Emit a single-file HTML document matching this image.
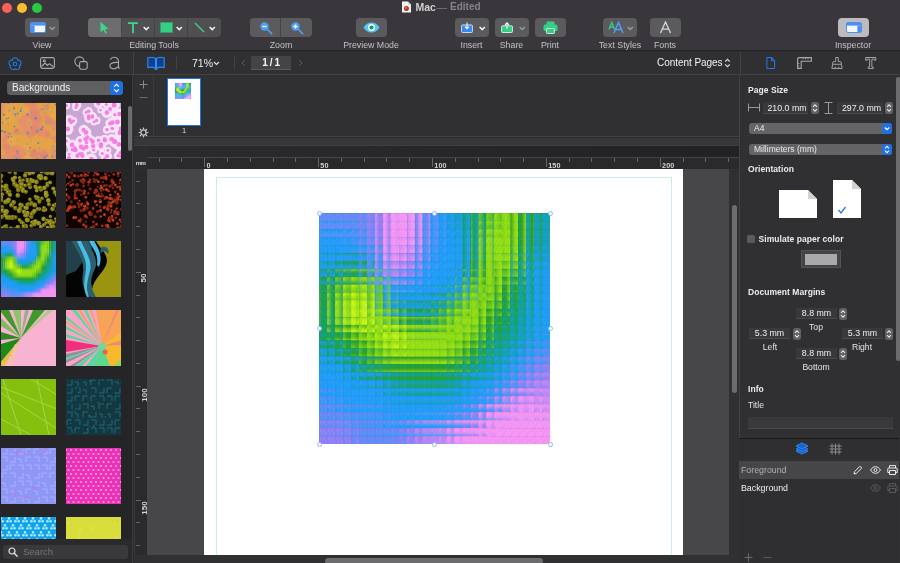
<!DOCTYPE html>
<html lang="en">
<head>
<meta charset="utf-8">
<title>Mac — Edited</title>
<style>
*{box-sizing:border-box;margin:0;padding:0}
html,body{width:900px;height:563px;overflow:hidden;background:#2b2a2d}
body{will-change:transform;font-family:"Liberation Sans",sans-serif;font-size:9px;color:#dcdcdc;position:relative;-webkit-font-smoothing:antialiased}
.abs{position:absolute}
/* ---------- toolbar ---------- */
#toolbar{position:absolute;left:0;top:0;width:900px;height:51px;background:#39373b;border-bottom:1px solid #252327}
.tl{position:absolute;top:3px;width:10px;height:10px;border-radius:50%}
.tbtn{position:absolute;top:18px;height:19px;border-radius:4px;background:#5b5a5d}
.tlabel{position:absolute;top:39.5px;width:80px;margin-left:-40px;text-align:center;font-size:8.8px;color:#c2c1c4;letter-spacing:0;line-height:11px;white-space:nowrap}
.seg{position:absolute;top:0;height:19px}
.chev{position:absolute;top:6.5px;width:6.5px;height:6.5px;margin-left:-.8px}
.title{position:absolute;top:1px;font-size:10.5px;line-height:12px;font-weight:bold;color:#d0cfd2;white-space:nowrap}
/* ---------- tab bar ---------- */
#tabbar{position:absolute;left:0;top:52px;width:900px;height:23px;background:#302f31;border-bottom:1px solid #414043}
.vsep{position:absolute;width:1px;background:#414043}
/* ---------- sidebar ---------- */
#sidebar{position:absolute;left:0;top:75px;width:133px;height:488px;background:#252427;border-right:1px solid #3b3a3d;overflow:hidden}
.th{position:absolute;width:55.5px;height:56px;overflow:hidden}
.th svg{display:block}
#bgsel{position:absolute;left:7px;top:6px;width:116px;height:14px;border-radius:3.5px;background:#5f5e61;color:#eeeeee;font-size:10px;line-height:14px;padding-left:5px;overflow:hidden}
#bgsel i{position:absolute;right:0;top:0;width:13px;height:14px;background:#1f6fe5;border-radius:3px}
#search{position:absolute;left:0;top:464px;width:132px;height:24px;background:#2a292c}
#search div{position:absolute;left:3px;top:6px;width:125px;height:14px;border-radius:3.5px;background:#39383b;color:#77767a;font-size:9.5px;line-height:14px;padding-left:20px}
/* ---------- page strip ---------- */
#strip{position:absolute;left:134px;top:75px;width:606px;height:62px;background:#302f31;border-bottom:1px solid #414043}
#splitter{position:absolute;left:134px;top:138px;width:606px;height:8px;background:#373638;border-bottom:1px solid #3f3e41}
/* ---------- canvas ---------- */
#canvas{position:absolute;left:147px;top:169px;width:582px;height:386px;background:#474649;overflow:hidden}
#page{position:absolute;left:57px;top:0;width:479px;height:400px;background:#fff}
#guides{position:absolute;left:12px;top:8px;width:456px;height:400px;border:1px solid #c9efea}
#rulertop{position:absolute;left:134px;top:146px;width:606px;height:11px;background:#2d2c2f}
#rulertop i{position:absolute;left:13px;top:0;width:592px;height:11px;background:linear-gradient(90deg,#2b2a2c,#222123)}
#rulerh{position:absolute;left:147px;top:157px;width:592px;height:12px;background:#2a292c;border-top:1px solid #454447;overflow:hidden}
#rulerv{position:absolute;left:134px;top:169px;width:13px;height:394px;background:#2a292c;overflow:hidden;border-left:1px solid #3a393c}
#rcorner{position:absolute;left:134px;top:157px;width:13px;height:12px;background:#2d2c2f;font-size:6px;font-weight:bold;color:#dedede;line-height:12px;text-align:center;letter-spacing:-.5px}
.rl{position:absolute;font-size:7.2px;font-weight:bold;color:#d4d4d4;line-height:8px;letter-spacing:.1px}
#vscroll{position:absolute;left:729px;top:169px;width:11px;height:386px;background:#302f32}
#vscroll i{position:absolute;left:3px;top:36px;width:5px;height:188px;border-radius:3px;background:#6c6b6e}
#hscroll{position:absolute;left:134px;top:555px;width:606px;height:8px;background:#302f32}
#hscroll i{position:absolute;left:191px;top:3px;width:218px;height:6px;border-radius:3px;background:#6c6b6e}
/* ---------- inspector ---------- */
#insp{position:absolute;left:739px;top:75px;width:161px;height:488px;background:#302f31;box-shadow:inset 2px 0 0 -1px #414043}
.h{position:absolute;left:9px;font-size:8.5px;font-weight:bold;color:#ececec;line-height:10px;white-space:nowrap;letter-spacing:.05px}
.fld{position:absolute;height:11px;background:#39383b;border-bottom:1px solid #4a494c;color:#efefef;font-size:8.8px;line-height:11px;text-align:center;white-space:nowrap}
.stp{position:absolute;width:8px;height:12px;border-radius:2.5px;background:#616063}
.stp svg,.sel i svg{display:block}
.sel{position:absolute;left:10px;width:143px;height:11px;border-radius:3px;background:#646366;color:#ececec;font-size:8.5px;line-height:11px;padding-left:5px}
.sel i{position:absolute;right:0;top:0;width:10px;height:11px;border-radius:3px;background:#1f6fe5}
.lab{position:absolute;width:60px;margin-left:-30px;text-align:center;font-size:8.6px;line-height:10px;color:#e4e4e4}
</style>
</head>
<body>
<div id="toolbar">
  <div class="tl" style="left:2px;background:#fe5f57"></div>
  <div class="tl" style="left:17px;background:#febc2e"></div>
  <div class="tl" style="left:32px;background:#28c840"></div>

  <svg class="abs" style="left:401px;top:1px" width="11" height="12" viewBox="0 0 11 12"><path d="M1 .5h6l3 3v8H1z" fill="#f4f4f4"/><path d="M7 .5l3 3H7z" fill="#c9c9c9"/><circle cx="5.4" cy="7.4" r="2.5" fill="#b8321c"/><circle cx="5" cy="7" r="1" fill="#e8853a"/></svg>
  <div class="title" style="left:415.5px">Mac</div><div class="title" style="left:436.5px;color:#7d7c80;font-weight:normal">—</div><div class="title" style="left:450px;color:#858488;font-size:10px">Edited</div>

  <!-- View -->
  <div class="tbtn" style="left:25px;width:34px">
    <svg class="abs" style="left:5px;top:4px" width="16" height="11" viewBox="0 0 16 11"><rect x=".5" y=".5" width="15" height="10" rx="1.5" fill="#f2f6ff" stroke="#4d90f0"/><rect x="1" y="1" width="14" height="2.6" fill="#4d90f0"/><rect x="1" y="3.6" width="3.6" height="6.4" fill="#4d90f0"/></svg>
    <svg class="chev" style="left:25px" viewBox="0 0 5 5"><path d="M.5 1.5l2 2 2-2" fill="none" stroke="#9a999c" stroke-width="1.1"/></svg>
  </div>
  <div class="tlabel" style="left:42px">View</div>

  <!-- Editing tools -->
  <div class="tbtn" style="left:88px;width:133px;background:#504f52;overflow:hidden">
    <div class="seg" style="left:0;width:33px;background:#6d6c6f"></div>
    <div class="seg" style="left:33px;width:1px;background:#444346"></div>
    <div class="seg" style="left:66px;width:1px;background:#444346"></div>
    <div class="seg" style="left:99px;width:1px;background:#444346"></div>
    <svg class="abs" style="left:11px;top:3px" width="11" height="13" viewBox="0 0 11 13"><path d="M1.5 .8l8 7.2-3.5 .3 2 3.6-1.5 .8-2-3.7-3 2.3z" fill="#3fd58a"/></svg>
    <svg class="abs" style="left:39px;top:4px" width="12" height="12" viewBox="0 0 12 12"><path d="M1 1.2h10M6 1.2v10" stroke="#3fd58a" stroke-width="1.8" fill="none"/></svg>
    <svg class="chev" style="left:56px" viewBox="0 0 5 5"><path d="M.5 1.5l2 2 2-2" fill="none" stroke="#f2f2f2" stroke-width="1.2"/></svg>
    <svg class="abs" style="left:72px;top:4px" width="13" height="11" viewBox="0 0 13 11"><rect x=".5" y=".5" width="12" height="10" fill="#35cf86" stroke="#2aa56a" stroke-dasharray="1 1"/></svg>
    <svg class="chev" style="left:89px" viewBox="0 0 5 5"><path d="M.5 1.5l2 2 2-2" fill="none" stroke="#f2f2f2" stroke-width="1.2"/></svg>
    <svg class="abs" style="left:106px;top:4px" width="11" height="11" viewBox="0 0 11 11"><path d="M1 1l9 9" stroke="#3fd58a" stroke-width="1.3"/></svg>
    <svg class="chev" style="left:122px" viewBox="0 0 5 5"><path d="M.5 1.5l2 2 2-2" fill="none" stroke="#f2f2f2" stroke-width="1.2"/></svg>
  </div>
  <div class="tlabel" style="left:154px">Editing Tools</div>

  <!-- Zoom -->
  <div class="tbtn" style="left:250px;width:62px">
    <div class="seg" style="left:30px;width:1px;background:#444346"></div>
    <svg class="abs" style="left:9px;top:3px" width="14" height="14" viewBox="0 0 14 14"><circle cx="5.5" cy="5.5" r="4.2" fill="#4fa0f5"/><path d="M8.6 8.6l4 4" stroke="#4fa0f5" stroke-width="1.6" stroke-linecap="round"/><path d="M3.4 5.5h4.2" stroke="#fff" stroke-width="1.3"/></svg>
    <svg class="abs" style="left:40px;top:3px" width="14" height="14" viewBox="0 0 14 14"><circle cx="5.5" cy="5.5" r="4.2" fill="#4fa0f5"/><path d="M8.6 8.6l4 4" stroke="#4fa0f5" stroke-width="1.6" stroke-linecap="round"/><path d="M3.4 5.5h4.2M5.5 3.4v4.2" stroke="#fff" stroke-width="1.3"/></svg>
  </div>
  <div class="tlabel" style="left:281px">Zoom</div>

  <!-- Preview -->
  <div class="tbtn" style="left:356px;width:31px">
    <svg class="abs" style="left:7px;top:4px" width="17" height="11" viewBox="0 0 17 11"><path d="M.5 5.5C3 1.5 6 .5 8.5 .5s5.5 1 8 5c-2.5 4-5.5 5-8 5s-5.5-1-8-5z" fill="#58c6f2"/><circle cx="8.5" cy="5.5" r="3.4" fill="#fff"/><circle cx="8.5" cy="5.5" r="2.1" fill="#1a9a63"/></svg>
  </div>
  <div class="tlabel" style="left:371px">Preview Mode</div>

  <!-- Insert -->
  <div class="tbtn" style="left:455px;width:34px">
    <svg class="abs" style="left:5.5px;top:4px" width="12" height="11" viewBox="0 0 14 13"><rect x=".6" y="3.5" width="12.8" height="8.9" rx="1" fill="#3b86ee" stroke="#cfe2ff" stroke-width="1.1"/><path d="M7 .5v7M4.6 5.500L7 8l2.4-2.5" stroke="#fff" stroke-width="1.2" fill="none"/></svg>
    <svg class="chev" style="left:25px" viewBox="0 0 5 5"><path d="M.5 1.5l2 2 2-2" fill="none" stroke="#f2f2f2" stroke-width="1.2"/></svg>
  </div>
  <div class="tlabel" style="left:471.500px">Insert</div>

  <!-- Share -->
  <div class="tbtn" style="left:495px;width:34px">
    <svg class="abs" style="left:5.5px;top:4px" width="12" height="11" viewBox="0 0 14 13"><rect x=".6" y="4.5" width="12.8" height="7.9" rx="1" fill="#35cf86" stroke="#d6f7e6" stroke-width="1.1"/><path d="M7 8V1M4.6 3.400L7 .9l2.4 2.5" stroke="#fff" stroke-width="1.2" fill="none"/></svg>
    <svg class="chev" style="left:25px" viewBox="0 0 5 5"><path d="M.5 1.5l2 2 2-2" fill="none" stroke="#9a999c" stroke-width="1.1"/></svg>
  </div>
  <div class="tlabel" style="left:511.500px">Share</div>

  <!-- Print -->
  <div class="tbtn" style="left:535px;width:31px">
    <svg class="abs" style="left:8px;top:3px" width="15" height="13" viewBox="0 0 15 13"><rect x="3.5" y=".5" width="8" height="3.5" rx=".8" fill="#35cf86"/><rect x=".5" y="3.6" width="14" height="6.4" rx="1.5" fill="#35cf86"/><rect x="3.5" y="7.5" width="8" height="5" rx=".8" fill="#35cf86" stroke="#d6f7e6" stroke-width=".9"/></svg>
  </div>
  <div class="tlabel" style="left:550px">Print</div>

  <!-- Text styles -->
  <div class="tbtn" style="left:603px;width:34px">
    <svg class="abs" style="left:5px;top:3px" width="17" height="13" viewBox="0 0 17 13"><path d="M1 8.500L3.8 1.5 6.6 8.500M2 6.200h3.6" stroke="#35cf86" stroke-width="1.3" fill="none"/><path d="M6 12L10.5 1.5 15 12M7.6 8.500h5.8" stroke="#4fa0f5" stroke-width="1.5" fill="none"/></svg>
    <svg class="chev" style="left:25px" viewBox="0 0 5 5"><path d="M.5 1.500l2 2 2-2" fill="none" stroke="#9a999c" stroke-width="1.1"/></svg>
  </div>
  <div class="tlabel" style="left:620px">Text Styles</div>

  <!-- Fonts -->
  <div class="tbtn" style="left:650px;width:31px">
    <svg class="abs" style="left:9px;top:3px" width="13" height="13" viewBox="0 0 13 13"><path d="M1.5 12L6.5 1l5 11M3.3 8.200h6.4" stroke="#d8d8d8" stroke-width="1.3" fill="none"/></svg>
  </div>
  <div class="tlabel" style="left:665px">Fonts</div>

  <!-- Inspector -->
  <div class="tbtn" style="left:838px;width:31px;background:#bcbbbe">
    <svg class="abs" style="left:8px;top:4px" width="16" height="11" viewBox="0 0 16 11"><rect x=".5" y=".5" width="15" height="10" rx="1.5" fill="#f2f6ff" stroke="#4d90f0"/><rect x="1" y="1" width="14" height="2.6" fill="#4d90f0"/><rect x="11.4" y="3.6" width="3.6" height="6.4" fill="#4d90f0"/></svg>
  </div>
  <div class="tlabel" style="left:853px">Inspector</div>
</div>

<div id="tabbar">
  <!-- sidebar tabs -->
  <svg class="abs" style="left:8px;top:4.5px" width="14" height="14" viewBox="0 0 14 14"><circle cx="7.00" cy="3.80" r="2.9" fill="none" stroke="#1f7bea" stroke-width="1.2"/><circle cx="10.04" cy="6.01" r="2.9" fill="none" stroke="#1f7bea" stroke-width="1.2"/><circle cx="8.88" cy="9.59" r="2.9" fill="none" stroke="#1f7bea" stroke-width="1.2"/><circle cx="5.12" cy="9.59" r="2.9" fill="none" stroke="#1f7bea" stroke-width="1.2"/><circle cx="3.96" cy="6.01" r="2.9" fill="none" stroke="#1f7bea" stroke-width="1.2"/><circle cx="7.00" cy="3.80" r="2.3" fill="#302f31"/><circle cx="10.04" cy="6.01" r="2.3" fill="#302f31"/><circle cx="8.88" cy="9.59" r="2.3" fill="#302f31"/><circle cx="5.12" cy="9.59" r="2.3" fill="#302f31"/><circle cx="3.96" cy="6.01" r="2.3" fill="#302f31"/><circle cx="7" cy="7" r="3.2" fill="#302f31"/><circle cx="7" cy="7" r="1.8" fill="none" stroke="#1f7bea" stroke-width="1.1"/></svg>
  <svg class="abs" style="left:40px;top:5px" width="15" height="12" viewBox="0 0 15 12"><g fill="none" stroke="#a9a8ab" stroke-width="1.1"><rect x=".6" y=".6" width="13.8" height="10.8" rx="1.8"/><path d="M1.5 9.500l3.5-3.5 2.5 2.5 2-1.8 4 3.3"/><circle cx="4.3" cy="3.8" r="1"/></g></svg>
  <svg class="abs" style="left:74px;top:4px" width="14" height="14" viewBox="0 0 14 14"><g fill="none" stroke="#a9a8ab" stroke-width="1.1"><circle cx="5.5" cy="5.5" r="4.6"/><rect x="5.6" y="5.6" width="7.6" height="7.6" rx="1.6" fill="#302f31"/></g></svg>
  <svg class="abs" style="left:108px;top:4px" width="13" height="14" viewBox="0 0 13 14"><g fill="none" stroke="#a9a8ab" stroke-width="1.1"><path d="M2.2 3.600C3.5 1.5 6 1 7.8 1.600c1.8.6 2.7 2 2.7 4v5.500c0 .8.5 1.2 1.3 1M10.5 6.500c-3-.3-5.5 0-7.3 1-1.8 1-1.8 3.5-.2 4.5 1.6 1 4.2.8 5.8-.3 1-.7 1.7-1.7 1.7-2.7"/></g></svg>
  <div class="vsep" style="left:133px;top:0;height:22px"></div>
  <!-- book -->
  <svg class="abs" style="left:147px;top:4px" width="18" height="15" viewBox="0 0 18 15"><path d="M.8 1.800C3.3 1 6.3 1.1 8.5 2.300v9.900C6.3 11 3.3 10.9.8 11.600zM17.2 1.800C14.7 1 11.7 1.1 9.5 2.300v9.900c2.2-1.2 5.2-1.3 7.7-.6z" fill="#10408c" stroke="#2f8af2" stroke-width="1.1" stroke-linejoin="round"/><path d="M7.3 12.600h3.400l-.6 1.400H7.900z" fill="#2f8af2"/></svg>
  <div class="vsep" style="left:176px;top:4px;height:14px"></div>
  <div class="abs" style="left:192px;top:5px;font-size:10.500px;line-height:12px;color:#ececec">71%</div>
  <svg class="abs" style="left:212.5px;top:9px" width="7" height="5" viewBox="0 0 7 5"><path d="M1 1l2.5 2.500L6 1" fill="none" stroke="#e0e0e0" stroke-width="1.2"/></svg>
  <div class="vsep" style="left:234px;top:4px;height:14px"></div>
  <svg class="abs" style="left:241px;top:7px" width="5" height="8" viewBox="0 0 5 8"><path d="M4 1L1 4l3 3" fill="none" stroke="#5c5b5e" stroke-width="1"/></svg>
  <div class="abs" style="left:250.500px;top:4px;width:40.500px;height:14px;background:#444346;border-bottom:1px solid #5a595c;font-size:10px;line-height:13.500px;text-align:center;color:#f4f4f4;font-weight:bold;word-spacing:-.8px;padding-left:1px">1 / 1</div>
  <svg class="abs" style="left:298px;top:7px" width="5" height="8" viewBox="0 0 5 8"><path d="M1 1l3 3-3 3" fill="none" stroke="#5c5b5e" stroke-width="1"/></svg>
  <div class="abs" style="left:657px;top:5px;font-size:10px;line-height:12px;color:#f2f2f2;white-space:nowrap;letter-spacing:-.05px">Content Pages</div>
  <svg class="abs" style="left:724px;top:6px" width="7" height="10" viewBox="0 0 7 10"><path d="M1.2 3.600L3.5 1.300l2.3 2.300M1.2 6.400l2.3 2.3 2.3-2.3" fill="none" stroke="#e0e0e0" stroke-width="1.1"/></svg>
  <div class="vsep" style="left:740px;top:0;height:22px"></div>
  <!-- inspector tabs -->
  <svg class="abs" style="left:766px;top:5px" width="9.5" height="12" viewBox="0 0 11 14"><path d="M1 1.600Q1 .6 2 .6h4.500L10 4.200v8.200q0 1-1 1H2q-1 0-1-1zM6.3.8v3.600H9.8" fill="none" stroke="#1f7bea" stroke-width="1.2"/></svg>
  <svg class="abs" style="left:797px;top:5px" width="15" height="12" viewBox="0 0 15 12"><path d="M.6 11.400V2.200Q.6.6 2.2.6H14.400V4.200H4.200V11.400z" fill="none" stroke="#a9a8ab" stroke-width="1.1"/><path d="M6 .8v1.600M8.5.8v1.600M11 .8v1.600M.8 6.500h1.600M.8 9h1.6" stroke="#a9a8ab" stroke-width=".8"/></svg>
  <svg class="abs" style="left:831px;top:5px" width="12" height="12" viewBox="0 0 14 14"><path d="M5.5.6h3v4.800h2.200q1.3 0 1.3 1.300V8.500H2V6.700q0-1.3 1.3-1.300H5.500zM2 8.500L1 13.400H13L12 8.500M5 13.200v-2M9 13.200v-2" fill="none" stroke="#a9a8ab" stroke-width="1.1"/></svg>
  <svg class="abs" style="left:865px;top:5px" width="11.5" height="12" viewBox="0 0 13 14"><path d="M.6.6H12.400V3.800H10.600V2.500H7.800V11.600H9.400V13.400H3.600V11.600H5.200V2.500H2.400V3.800H.6z" fill="none" stroke="#a9a8ab" stroke-width="1.1" stroke-linejoin="round"/></svg>
</div>

<div id="sidebar">
<div id="bgsel">Backgrounds<i><svg width="13" height="14" viewBox="0 0 13 14"><path d="M4.2 5.600L6.5 3.300l2.3 2.300M4.2 8.400l2.3 2.3 2.3-2.3" fill="none" stroke="#fff" stroke-width="1.2"/></svg></i></div>
<div class="th" style="left:0.5px;top:28px"><svg width="56" height="56" viewBox="0 0 56 56"><defs><filter id="t0b"><feGaussianBlur stdDeviation=".8"/></filter></defs><rect width="56" height="56" fill="#e5a346"/><g filter="url(#t0b)"><circle cx="6.1" cy="48.8" r="4.4" fill="#e8a848"/><circle cx="5.1" cy="43.7" r="3.7" fill="#e4866e"/><circle cx="45.3" cy="3.6" r="2.6" fill="#e4866e"/><circle cx="24.0" cy="43.7" r="2.5" fill="#e4866e"/><circle cx="14.0" cy="46.1" r="4.0" fill="#e78b6b"/><circle cx="52.1" cy="-0.2" r="2.6" fill="#e78b6b"/><circle cx="54.3" cy="20.9" r="3.0" fill="#e4866e"/><circle cx="41.6" cy="29.7" r="4.4" fill="#e4866e"/><circle cx="31.2" cy="18.7" r="4.2" fill="#e4866e"/><circle cx="55.1" cy="53.6" r="3.5" fill="#e78b6b"/><circle cx="9.2" cy="57.6" r="4.6" fill="#e78b6b"/><circle cx="42.6" cy="51.7" r="4.9" fill="#e4866e"/><circle cx="28.5" cy="52.6" r="3.0" fill="#e8a848"/><circle cx="33.3" cy="50.9" r="4.6" fill="#e4866e"/><circle cx="33.3" cy="0.1" r="3.1" fill="#e4866e"/><circle cx="22.9" cy="8.4" r="3.9" fill="#e8a848"/><circle cx="3.2" cy="37.8" r="2.8" fill="#e6906a"/><circle cx="29.3" cy="21.6" r="3.7" fill="#e78b6b"/><circle cx="26.2" cy="16.5" r="4.6" fill="#e4866e"/><circle cx="36.8" cy="8.1" r="3.1" fill="#e78b6b"/><circle cx="44.2" cy="30.4" r="4.7" fill="#e6906a"/><circle cx="22.3" cy="18.6" r="4.6" fill="#e8a848"/><circle cx="25.5" cy="14.2" r="3.9" fill="#e78b6b"/><circle cx="21.0" cy="49.4" r="4.9" fill="#e6906a"/><circle cx="29.1" cy="31.7" r="3.6" fill="#e78b6b"/><circle cx="26.9" cy="19.9" r="3.9" fill="#e4866e"/><circle cx="27.1" cy="19.4" r="3.4" fill="#e8a848"/><circle cx="25.5" cy="-0.3" r="3.1" fill="#e6906a"/><circle cx="31.0" cy="8.8" r="2.7" fill="#e8a848"/><circle cx="-0.1" cy="54.6" r="2.7" fill="#e78b6b"/><circle cx="25.2" cy="43.2" r="3.2" fill="#e8a848"/><circle cx="4.6" cy="35.5" r="3.4" fill="#e78b6b"/><circle cx="8.0" cy="13.3" r="4.9" fill="#e8a848"/><circle cx="36.9" cy="15.7" r="4.3" fill="#e4866e"/><circle cx="26.4" cy="-0.6" r="3.5" fill="#e4866e"/><circle cx="45.8" cy="13.5" r="3.1" fill="#e6906a"/><circle cx="55.9" cy="23.9" r="4.9" fill="#e6906a"/><circle cx="-0.9" cy="6.8" r="4.3" fill="#e6906a"/><circle cx="24.7" cy="28.4" r="3.6" fill="#e6906a"/><circle cx="56.6" cy="35.8" r="4.2" fill="#e4866e"/><circle cx="11.4" cy="36.9" r="3.5" fill="#e8a848"/><circle cx="37.6" cy="23.6" r="4.3" fill="#e6906a"/><circle cx="56.1" cy="50.5" r="3.3" fill="#e78b6b"/><circle cx="16.6" cy="54.4" r="4.4" fill="#e4866e"/><circle cx="31.9" cy="5.8" r="3.9" fill="#e78b6b"/><circle cx="33.4" cy="11.1" r="4.8" fill="#e4866e"/><circle cx="8.3" cy="50.1" r="4.9" fill="#e78b6b"/><circle cx="20.7" cy="18.8" r="3.0" fill="#e4866e"/><circle cx="33.5" cy="27.5" r="4.8" fill="#e4866e"/><circle cx="15.8" cy="28.0" r="3.3" fill="#e4866e"/><circle cx="52.0" cy="-0.9" r="3.0" fill="#e8a848"/><circle cx="46.7" cy="31.8" r="2.8" fill="#e4866e"/><circle cx="10.8" cy="38.5" r="4.6" fill="#e8a848"/><circle cx="52.9" cy="48.3" r="3.8" fill="#e6906a"/><circle cx="1.9" cy="0.4" r="2.8" fill="#e6906a"/><circle cx="52.7" cy="10.8" r="4.4" fill="#e8a848"/><circle cx="20.1" cy="18.4" r="3.2" fill="#e4866e"/><circle cx="6.1" cy="31.1" r="2.8" fill="#e78b6b"/><circle cx="22.4" cy="20.8" r="5.0" fill="#e6906a"/><circle cx="47.7" cy="18.5" r="4.0" fill="#e4866e"/></g><circle cx="55.4" cy="54.9" r="0.6" fill="#5f8ab4"/><circle cx="19.7" cy="8.1" r="1.0" fill="#4f7fb6"/><circle cx="13.1" cy="10.7" r="0.6" fill="#7b9fae"/><circle cx="58.0" cy="36.3" r="1.0" fill="#4f7fb6"/><circle cx="30.7" cy="24.7" r="0.7" fill="#5f8ab4"/><circle cx="50.3" cy="19.8" r="1.1" fill="#8aa6a0"/><circle cx="23.4" cy="51.0" r="0.7" fill="#7b9fae"/><circle cx="12.2" cy="-0.6" r="0.8" fill="#7b9fae"/><circle cx="28.6" cy="19.6" r="0.9" fill="#7b9fae"/><circle cx="57.7" cy="24.7" r="0.8" fill="#4f7fb6"/><circle cx="45.4" cy="19.2" r="1.1" fill="#8aa6a0"/><circle cx="7.7" cy="43.2" r="1.0" fill="#8aa6a0"/><circle cx="37.3" cy="13.0" r="0.7" fill="#8aa6a0"/><circle cx="28.1" cy="47.9" r="0.8" fill="#8aa6a0"/><circle cx="52.0" cy="25.7" r="0.9" fill="#8aa6a0"/><circle cx="27.2" cy="11.3" r="0.8" fill="#7b9fae"/><circle cx="50.6" cy="35.0" r="1.0" fill="#8aa6a0"/><circle cx="16.6" cy="55.4" r="1.0" fill="#8aa6a0"/><circle cx="16.7" cy="10.5" r="0.9" fill="#5f8ab4"/><circle cx="45.1" cy="18.5" r="0.6" fill="#7b9fae"/><circle cx="57.8" cy="4.4" r="0.9" fill="#5f8ab4"/><circle cx="14.4" cy="11.6" r="1.0" fill="#5f8ab4"/><circle cx="43.3" cy="6.2" r="0.7" fill="#7b9fae"/><circle cx="54.6" cy="1.6" r="1.0" fill="#5f8ab4"/><circle cx="1.4" cy="19.6" r="0.7" fill="#5f8ab4"/><circle cx="3.0" cy="55.3" r="0.6" fill="#5f8ab4"/><circle cx="20.4" cy="5.7" r="1.1" fill="#7b9fae"/><circle cx="29.4" cy="-1.9" r="0.9" fill="#7b9fae"/><circle cx="7.1" cy="0.2" r="0.8" fill="#5f8ab4"/><circle cx="15.2" cy="27.3" r="0.8" fill="#5f8ab4"/><circle cx="52.1" cy="43.3" r="1.0" fill="#7b9fae"/><circle cx="26.4" cy="11.5" r="0.9" fill="#4f7fb6"/><circle cx="48.3" cy="-0.5" r="1.0" fill="#7b9fae"/><circle cx="29.1" cy="44.9" r="0.8" fill="#4f7fb6"/><circle cx="6.6" cy="55.6" r="0.7" fill="#8aa6a0"/><circle cx="37.2" cy="40.0" r="1.1" fill="#5f8ab4"/><circle cx="13.2" cy="5.9" r="0.7" fill="#8aa6a0"/><circle cx="36.1" cy="28.5" r="1.1" fill="#5f8ab4"/><circle cx="57.7" cy="11.9" r="0.8" fill="#4f7fb6"/><circle cx="2.8" cy="11.7" r="1.0" fill="#4f7fb6"/><circle cx="13.4" cy="23.4" r="0.9" fill="#5f8ab4"/><circle cx="7.1" cy="21.1" r="0.7" fill="#5f8ab4"/><circle cx="12.5" cy="4.0" r="0.7" fill="#7b9fae"/><circle cx="4.3" cy="-0.5" r="0.9" fill="#8aa6a0"/><circle cx="16.6" cy="36.5" r="0.7" fill="#7b9fae"/><circle cx="41.7" cy="24.0" r="0.9" fill="#5f8ab4"/><circle cx="50.9" cy="53.7" r="0.9" fill="#5f8ab4"/><circle cx="37.8" cy="26.8" r="0.6" fill="#5f8ab4"/><circle cx="34.6" cy="15.4" r="1.1" fill="#4f7fb6"/><circle cx="16.5" cy="50.5" r="0.8" fill="#5f8ab4"/><circle cx="16.4" cy="48.4" r="0.9" fill="#5f8ab4"/><circle cx="46.7" cy="1.6" r="0.9" fill="#8aa6a0"/><circle cx="10.5" cy="33.3" r="0.6" fill="#4f7fb6"/><circle cx="-0.6" cy="16.3" r="1.0" fill="#7b9fae"/><circle cx="43.3" cy="9.5" r="0.9" fill="#8aa6a0"/><circle cx="41.0" cy="6.4" r="0.8" fill="#5f8ab4"/><circle cx="13.2" cy="5.4" r="0.9" fill="#4f7fb6"/><circle cx="36.5" cy="55.6" r="0.9" fill="#5f8ab4"/><circle cx="35.1" cy="26.2" r="0.6" fill="#8aa6a0"/><circle cx="15.4" cy="55.6" r="0.7" fill="#4f7fb6"/><circle cx="14.1" cy="29.6" r="0.8" fill="#8aa6a0"/><circle cx="53.9" cy="48.2" r="0.7" fill="#7b9fae"/><circle cx="7.4" cy="33.8" r="0.9" fill="#5f8ab4"/><circle cx="33.2" cy="47.1" r="0.6" fill="#4f7fb6"/><circle cx="8.6" cy="30.7" r="1.0" fill="#5f8ab4"/><circle cx="45.9" cy="52.7" r="0.9" fill="#5f8ab4"/><circle cx="5.7" cy="15.8" r="0.7" fill="#4f7fb6"/><circle cx="24.3" cy="29.4" r="0.7" fill="#8aa6a0"/><circle cx="3.8" cy="29.0" r="1.0" fill="#4f7fb6"/><circle cx="8.2" cy="7.5" r="1.1" fill="#7b9fae"/><circle cx="22.2" cy="57.7" r="1.0" fill="#7b9fae"/><circle cx="26.0" cy="41.1" r="1.0" fill="#8aa6a0"/><circle cx="50.9" cy="8.8" r="0.9" fill="#8aa6a0"/><circle cx="14.4" cy="13.2" r="1.0" fill="#8aa6a0"/><circle cx="40.3" cy="26.3" r="1.1" fill="#4f7fb6"/><circle cx="40.8" cy="52.7" r="0.6" fill="#7b9fae"/><circle cx="30.0" cy="9.3" r="1.0" fill="#8aa6a0"/><circle cx="56.6" cy="36.1" r="0.6" fill="#8aa6a0"/><circle cx="29.4" cy="52.4" r="0.8" fill="#7b9fae"/><circle cx="47.0" cy="-1.0" r="1.1" fill="#8aa6a0"/><circle cx="52.3" cy="51.1" r="0.7" fill="#7b9fae"/><circle cx="14.5" cy="53.3" r="0.9" fill="#8aa6a0"/><circle cx="46.3" cy="6.3" r="0.9" fill="#8aa6a0"/><circle cx="26.9" cy="28.8" r="0.7" fill="#7b9fae"/><circle cx="56.3" cy="43.6" r="0.8" fill="#8aa6a0"/><circle cx="30.0" cy="38.1" r="0.6" fill="#8aa6a0"/><circle cx="53.5" cy="53.3" r="0.8" fill="#8aa6a0"/><circle cx="-0.3" cy="2.8" r="1.0" fill="#7b9fae"/><circle cx="43.6" cy="54.3" r="1.1" fill="#4f7fb6"/><circle cx="38.5" cy="45.2" r="1.0" fill="#7b9fae"/><circle cx="1.2" cy="28.0" r="1.1" fill="#4f7fb6"/><circle cx="7.4" cy="15.0" r="0.8" fill="#5f8ab4"/><circle cx="20.0" cy="30.3" r="0.8" fill="#8aa6a0"/><circle cx="10.3" cy="38.6" r="0.8" fill="#7b9fae"/><circle cx="27.0" cy="30.3" r="1.1" fill="#5f8ab4"/></svg></div>
<div class="th" style="left:65.5px;top:28px"><svg width="56" height="56" viewBox="0 0 56 56"><defs><filter id="t1b"><feGaussianBlur stdDeviation=".5"/></filter></defs><rect width="56" height="56" fill="#c9a5d5"/><circle cx="34.9" cy="41.5" r="5.4" fill="#fbe3f8"/><circle cx="52.8" cy="41.4" r="5.8" fill="#fbe3f8"/><circle cx="1.6" cy="26.1" r="5.8" fill="#fbe3f8"/><circle cx="36.3" cy="50.5" r="3.5" fill="#fbe3f8"/><circle cx="26.3" cy="13.8" r="4.7" fill="#fbe3f8"/><circle cx="32.1" cy="0.7" r="3.8" fill="#fbe3f8"/><circle cx="15.7" cy="51.3" r="5.3" fill="#fbe3f8"/><circle cx="8.9" cy="44.6" r="3.6" fill="#fbe3f8"/><circle cx="34.6" cy="7.1" r="3.2" fill="#fbe3f8"/><circle cx="48.8" cy="11.7" r="3.8" fill="#fbe3f8"/><circle cx="55.0" cy="48.9" r="4.0" fill="#fbe3f8"/><circle cx="53.8" cy="30.2" r="5.1" fill="#fbe3f8"/><circle cx="11.5" cy="52.7" r="5.1" fill="#fbe3f8"/><circle cx="54.1" cy="50.0" r="4.0" fill="#fbe3f8"/><circle cx="20.2" cy="9.3" r="3.6" fill="#fbe3f8"/><circle cx="3.6" cy="16.9" r="4.9" fill="#fbe3f8"/><circle cx="0.2" cy="38.0" r="4.1" fill="#fbe3f8"/><circle cx="17.4" cy="45.8" r="4.5" fill="#fbe3f8"/><circle cx="17.7" cy="26.9" r="5.2" fill="#fbe3f8"/><circle cx="3.2" cy="54.6" r="3.3" fill="#fbe3f8"/><circle cx="42.0" cy="47.3" r="3.3" fill="#fbe3f8"/><circle cx="44.1" cy="20.5" r="4.8" fill="#fbe3f8"/><circle cx="0.5" cy="2.6" r="3.7" fill="#fbe3f8"/><circle cx="53.5" cy="11.0" r="5.3" fill="#fbe3f8"/><circle cx="52.1" cy="52.8" r="4.2" fill="#fbe3f8"/><circle cx="19.9" cy="29.4" r="5.4" fill="#fbe3f8"/><circle cx="6.1" cy="41.9" r="5.4" fill="#fbe3f8"/><circle cx="48.1" cy="2.1" r="5.8" fill="#fbe3f8"/><circle cx="5.1" cy="19.1" r="4.9" fill="#fbe3f8"/><circle cx="51.4" cy="19.0" r="5.8" fill="#fbe3f8"/><circle cx="30.5" cy="17.5" r="4.1" fill="#fbe3f8"/><circle cx="9.9" cy="4.4" r="3.6" fill="#fbe3f8"/><circle cx="38.6" cy="55.8" r="3.7" fill="#fbe3f8"/><circle cx="2.7" cy="55.3" r="4.7" fill="#fbe3f8"/><circle cx="22.7" cy="13.3" r="4.9" fill="#fbe3f8"/><circle cx="46.3" cy="25.5" r="4.4" fill="#fbe3f8"/><circle cx="3.1" cy="51.3" r="3.3" fill="#fbe3f8"/><circle cx="27.6" cy="47.0" r="3.6" fill="#fbe3f8"/><circle cx="41.0" cy="53.2" r="5.0" fill="#fbe3f8"/><circle cx="44.1" cy="6.0" r="4.4" fill="#fbe3f8"/><circle cx="8.4" cy="47.3" r="4.0" fill="#fbe3f8"/><circle cx="25.4" cy="56.0" r="5.6" fill="#fbe3f8"/><circle cx="54.7" cy="25.4" r="4.6" fill="#fbe3f8"/><circle cx="40.9" cy="26.8" r="4.0" fill="#fbe3f8"/><circle cx="22.6" cy="8.2" r="4.3" fill="#fbe3f8"/><circle cx="55.3" cy="53.7" r="5.0" fill="#fbe3f8"/><circle cx="28.0" cy="19.0" r="3.4" fill="#fbe3f8"/><circle cx="15.2" cy="43.8" r="5.6" fill="#fbe3f8"/><circle cx="20.2" cy="44.0" r="5.4" fill="#fbe3f8"/><circle cx="38.9" cy="37.2" r="5.3" fill="#fbe3f8"/><circle cx="20.4" cy="39.5" r="4.0" fill="#fbe3f8"/><circle cx="27.2" cy="43.1" r="5.1" fill="#fbe3f8"/><circle cx="16.5" cy="53.0" r="5.0" fill="#fbe3f8"/><circle cx="32.5" cy="0.6" r="4.7" fill="#fbe3f8"/><circle cx="14.0" cy="37.6" r="4.5" fill="#fbe3f8"/><circle cx="45.7" cy="36.3" r="5.4" fill="#fbe3f8"/><circle cx="19.5" cy="36.1" r="5.3" fill="#fbe3f8"/><circle cx="46.4" cy="19.6" r="5.6" fill="#fbe3f8"/><circle cx="48.7" cy="38.5" r="5.9" fill="#fbe3f8"/><circle cx="53.6" cy="29.0" r="4.7" fill="#fbe3f8"/><circle cx="9.3" cy="46.9" r="5.8" fill="#fbe3f8"/><circle cx="26.7" cy="38.7" r="5.2" fill="#fbe3f8"/><circle cx="40.9" cy="9.6" r="5.4" fill="#fbe3f8"/><circle cx="32.5" cy="37.3" r="4.4" fill="#fbe3f8"/><circle cx="34.9" cy="43.4" r="5.0" fill="#fbe3f8"/><circle cx="40.3" cy="1.5" r="3.6" fill="#fbe3f8"/><circle cx="24.7" cy="36.4" r="3.8" fill="#fbe3f8"/><circle cx="38.4" cy="35.3" r="3.3" fill="#fbe3f8"/><circle cx="26.4" cy="12.7" r="3.4" fill="#fbe3f8"/><circle cx="7.5" cy="17.8" r="3.7" fill="#fbe3f8"/><circle cx="10.8" cy="2.0" r="4.5" fill="#fbe3f8"/><circle cx="21.3" cy="34.3" r="4.9" fill="#fbe3f8"/><circle cx="13.3" cy="50.6" r="3.2" fill="#fbe3f8"/><circle cx="22.7" cy="15.6" r="4.3" fill="#fbe3f8"/><circle cx="6.4" cy="46.6" r="4.2" fill="#fbe3f8"/><g filter="url(#t1b)"><circle cx="34.9" cy="41.5" r="2.3" fill="#f47fe6"/><circle cx="52.8" cy="41.4" r="2.4" fill="#f47fe6"/><circle cx="1.6" cy="26.1" r="2.5" fill="#f47fe6"/><circle cx="36.3" cy="50.5" r="1.5" fill="#f47fe6"/><circle cx="26.3" cy="13.8" r="2.0" fill="#f47fe6"/><circle cx="32.1" cy="0.7" r="1.6" fill="#f47fe6"/><circle cx="15.7" cy="51.3" r="2.2" fill="#f47fe6"/><circle cx="8.9" cy="44.6" r="1.5" fill="#f47fe6"/><circle cx="34.6" cy="7.1" r="1.3" fill="#f47fe6"/><circle cx="48.8" cy="11.7" r="1.6" fill="#f47fe6"/><circle cx="55.0" cy="48.9" r="1.7" fill="#f47fe6"/><circle cx="53.8" cy="30.2" r="2.1" fill="#f47fe6"/><circle cx="11.5" cy="52.7" r="2.2" fill="#f47fe6"/><circle cx="54.1" cy="50.0" r="1.7" fill="#f47fe6"/><circle cx="20.2" cy="9.3" r="1.5" fill="#f47fe6"/><circle cx="3.6" cy="16.9" r="2.1" fill="#f47fe6"/><circle cx="0.2" cy="38.0" r="1.7" fill="#f47fe6"/><circle cx="17.4" cy="45.8" r="1.9" fill="#f47fe6"/><circle cx="17.7" cy="26.9" r="2.2" fill="#f47fe6"/><circle cx="3.2" cy="54.6" r="1.4" fill="#f47fe6"/><circle cx="42.0" cy="47.3" r="1.4" fill="#f47fe6"/><circle cx="44.1" cy="20.5" r="2.0" fill="#f47fe6"/><circle cx="0.5" cy="2.6" r="1.6" fill="#f47fe6"/><circle cx="53.5" cy="11.0" r="2.2" fill="#f47fe6"/><circle cx="52.1" cy="52.8" r="1.7" fill="#f47fe6"/><circle cx="19.9" cy="29.4" r="2.3" fill="#f47fe6"/><circle cx="6.1" cy="41.9" r="2.3" fill="#f47fe6"/><circle cx="48.1" cy="2.1" r="2.5" fill="#f47fe6"/><circle cx="5.1" cy="19.1" r="2.1" fill="#f47fe6"/><circle cx="51.4" cy="19.0" r="2.4" fill="#f47fe6"/><circle cx="30.5" cy="17.5" r="1.7" fill="#f47fe6"/><circle cx="9.9" cy="4.4" r="1.5" fill="#f47fe6"/><circle cx="38.6" cy="55.8" r="1.5" fill="#f47fe6"/><circle cx="2.7" cy="55.3" r="2.0" fill="#f47fe6"/><circle cx="22.7" cy="13.3" r="2.0" fill="#f47fe6"/><circle cx="46.3" cy="25.5" r="1.8" fill="#f47fe6"/><circle cx="3.1" cy="51.3" r="1.4" fill="#f47fe6"/><circle cx="27.6" cy="47.0" r="1.5" fill="#f47fe6"/><circle cx="41.0" cy="53.2" r="2.1" fill="#f47fe6"/><circle cx="44.1" cy="6.0" r="1.9" fill="#f47fe6"/><circle cx="8.4" cy="47.3" r="1.7" fill="#f47fe6"/><circle cx="25.4" cy="56.0" r="2.3" fill="#f47fe6"/><circle cx="54.7" cy="25.4" r="1.9" fill="#f47fe6"/><circle cx="40.9" cy="26.8" r="1.7" fill="#f47fe6"/><circle cx="22.6" cy="8.2" r="1.8" fill="#f47fe6"/><circle cx="55.3" cy="53.7" r="2.1" fill="#f47fe6"/><circle cx="28.0" cy="19.0" r="1.4" fill="#f47fe6"/><circle cx="15.2" cy="43.8" r="2.4" fill="#f47fe6"/><circle cx="20.2" cy="44.0" r="2.3" fill="#f47fe6"/><circle cx="38.9" cy="37.2" r="2.2" fill="#f47fe6"/><circle cx="20.4" cy="39.5" r="1.7" fill="#f47fe6"/><circle cx="27.2" cy="43.1" r="2.2" fill="#f47fe6"/><circle cx="16.5" cy="53.0" r="2.1" fill="#f47fe6"/><circle cx="32.5" cy="0.6" r="2.0" fill="#f47fe6"/><circle cx="14.0" cy="37.6" r="1.9" fill="#f47fe6"/><circle cx="45.7" cy="36.3" r="2.3" fill="#f47fe6"/><circle cx="19.5" cy="36.1" r="2.2" fill="#f47fe6"/><circle cx="46.4" cy="19.6" r="2.3" fill="#f47fe6"/><circle cx="48.7" cy="38.5" r="2.5" fill="#f47fe6"/><circle cx="53.6" cy="29.0" r="2.0" fill="#f47fe6"/><circle cx="9.3" cy="46.9" r="2.4" fill="#f47fe6"/><circle cx="26.7" cy="38.7" r="2.2" fill="#f47fe6"/><circle cx="40.9" cy="9.6" r="2.3" fill="#f47fe6"/><circle cx="32.5" cy="37.3" r="1.8" fill="#f47fe6"/><circle cx="34.9" cy="43.4" r="2.1" fill="#f47fe6"/><circle cx="40.3" cy="1.5" r="1.5" fill="#f47fe6"/><circle cx="24.7" cy="36.4" r="1.6" fill="#f47fe6"/><circle cx="38.4" cy="35.3" r="1.4" fill="#f47fe6"/><circle cx="26.4" cy="12.7" r="1.4" fill="#f47fe6"/><circle cx="7.5" cy="17.8" r="1.6" fill="#f47fe6"/><circle cx="10.8" cy="2.0" r="1.9" fill="#f47fe6"/><circle cx="21.3" cy="34.3" r="2.0" fill="#f47fe6"/><circle cx="13.3" cy="50.6" r="1.3" fill="#f47fe6"/><circle cx="22.7" cy="15.6" r="1.8" fill="#f47fe6"/><circle cx="6.4" cy="46.6" r="1.8" fill="#f47fe6"/></g></svg></div>
<div class="th" style="left:0.5px;top:97px"><svg width="56" height="56" viewBox="0 0 56 56"><rect width="56" height="56" fill="#080701"/><circle cx="12.3" cy="30.7" r="2.0" fill="#938b1c"/><circle cx="11.8" cy="30.2" r="0.9" fill="#aaa12c"/><circle cx="26.4" cy="32.9" r="2.2" fill="#736d12"/><circle cx="25.9" cy="32.3" r="1.0" fill="#aaa12c"/><circle cx="13.6" cy="12.1" r="2.5" fill="#736d12"/><circle cx="12.9" cy="11.4" r="1.1" fill="#aaa12c"/><circle cx="30.5" cy="31.0" r="2.0" fill="#857e16"/><circle cx="30.0" cy="30.5" r="0.9" fill="#aaa12c"/><circle cx="11.9" cy="7.1" r="2.4" fill="#736d12"/><circle cx="11.3" cy="6.5" r="1.1" fill="#aaa12c"/><circle cx="42.5" cy="38.3" r="1.8" fill="#938b1c"/><circle cx="42.0" cy="37.8" r="0.8" fill="#aaa12c"/><circle cx="0.6" cy="44.8" r="2.4" fill="#736d12"/><circle cx="-0.0" cy="44.2" r="1.1" fill="#aaa12c"/><circle cx="26.4" cy="41.1" r="2.4" fill="#938b1c"/><circle cx="25.8" cy="40.5" r="1.1" fill="#aaa12c"/><circle cx="45.3" cy="23.6" r="2.3" fill="#938b1c"/><circle cx="44.7" cy="23.0" r="1.0" fill="#aaa12c"/><circle cx="24.7" cy="54.1" r="2.4" fill="#857e16"/><circle cx="24.1" cy="53.5" r="1.1" fill="#aaa12c"/><circle cx="0.2" cy="27.7" r="1.9" fill="#938b1c"/><circle cx="-0.3" cy="27.2" r="0.9" fill="#aaa12c"/><circle cx="24.2" cy="35.6" r="1.9" fill="#938b1c"/><circle cx="23.7" cy="35.1" r="0.9" fill="#aaa12c"/><circle cx="48.0" cy="32.4" r="2.1" fill="#736d12"/><circle cx="47.5" cy="31.9" r="1.0" fill="#aaa12c"/><circle cx="33.1" cy="52.3" r="2.2" fill="#857e16"/><circle cx="32.5" cy="51.7" r="1.0" fill="#aaa12c"/><circle cx="49.4" cy="57.5" r="2.2" fill="#857e16"/><circle cx="48.8" cy="56.9" r="1.0" fill="#aaa12c"/><circle cx="39.9" cy="17.6" r="2.1" fill="#938b1c"/><circle cx="39.4" cy="17.1" r="1.0" fill="#aaa12c"/><circle cx="32.1" cy="40.8" r="1.9" fill="#938b1c"/><circle cx="31.7" cy="40.4" r="0.8" fill="#aaa12c"/><circle cx="14.0" cy="5.5" r="2.1" fill="#938b1c"/><circle cx="13.5" cy="4.9" r="0.9" fill="#aaa12c"/><circle cx="57.4" cy="3.3" r="2.3" fill="#736d12"/><circle cx="56.8" cy="2.7" r="1.1" fill="#aaa12c"/><circle cx="51.8" cy="-0.8" r="2.0" fill="#736d12"/><circle cx="51.3" cy="-1.3" r="0.9" fill="#aaa12c"/><circle cx="50.4" cy="0.7" r="2.2" fill="#857e16"/><circle cx="49.8" cy="0.1" r="1.0" fill="#aaa12c"/><circle cx="20.7" cy="33.2" r="2.1" fill="#736d12"/><circle cx="20.1" cy="32.6" r="1.0" fill="#aaa12c"/><circle cx="28.3" cy="57.9" r="1.9" fill="#857e16"/><circle cx="27.8" cy="57.4" r="0.9" fill="#aaa12c"/><circle cx="4.5" cy="30.1" r="2.5" fill="#736d12"/><circle cx="3.9" cy="29.5" r="1.1" fill="#aaa12c"/><circle cx="15.5" cy="13.8" r="2.3" fill="#736d12"/><circle cx="14.9" cy="13.2" r="1.0" fill="#aaa12c"/><circle cx="16.8" cy="55.5" r="2.4" fill="#736d12"/><circle cx="16.2" cy="54.9" r="1.1" fill="#aaa12c"/><circle cx="20.6" cy="50.2" r="2.0" fill="#938b1c"/><circle cx="20.1" cy="49.7" r="0.9" fill="#aaa12c"/><circle cx="38.9" cy="4.2" r="2.5" fill="#938b1c"/><circle cx="38.2" cy="3.5" r="1.1" fill="#aaa12c"/><circle cx="14.3" cy="36.1" r="2.3" fill="#736d12"/><circle cx="13.7" cy="35.5" r="1.0" fill="#aaa12c"/><circle cx="24.2" cy="13.5" r="1.9" fill="#736d12"/><circle cx="23.8" cy="13.0" r="0.9" fill="#aaa12c"/><circle cx="-1.3" cy="22.9" r="2.2" fill="#857e16"/><circle cx="-1.9" cy="22.4" r="1.0" fill="#aaa12c"/><circle cx="20.6" cy="33.4" r="1.8" fill="#938b1c"/><circle cx="20.1" cy="32.9" r="0.8" fill="#aaa12c"/><circle cx="35.6" cy="26.0" r="2.2" fill="#736d12"/><circle cx="35.1" cy="25.4" r="1.0" fill="#aaa12c"/><circle cx="34.5" cy="14.7" r="2.1" fill="#938b1c"/><circle cx="34.0" cy="14.2" r="0.9" fill="#aaa12c"/><circle cx="1.6" cy="38.6" r="2.5" fill="#736d12"/><circle cx="1.0" cy="37.9" r="1.1" fill="#aaa12c"/><circle cx="35.7" cy="15.9" r="2.2" fill="#857e16"/><circle cx="35.1" cy="15.4" r="1.0" fill="#aaa12c"/><circle cx="19.8" cy="16.8" r="2.0" fill="#938b1c"/><circle cx="19.3" cy="16.3" r="0.9" fill="#aaa12c"/><circle cx="13.8" cy="45.2" r="1.8" fill="#857e16"/><circle cx="13.4" cy="44.8" r="0.8" fill="#aaa12c"/><circle cx="56.3" cy="39.0" r="1.8" fill="#938b1c"/><circle cx="55.8" cy="38.6" r="0.8" fill="#aaa12c"/><circle cx="11.4" cy="46.2" r="1.9" fill="#857e16"/><circle cx="10.9" cy="45.8" r="0.9" fill="#aaa12c"/><circle cx="38.7" cy="37.0" r="1.8" fill="#938b1c"/><circle cx="38.2" cy="36.5" r="0.8" fill="#aaa12c"/><circle cx="17.3" cy="18.0" r="2.4" fill="#736d12"/><circle cx="16.7" cy="17.4" r="1.1" fill="#aaa12c"/><circle cx="46.6" cy="55.6" r="1.8" fill="#938b1c"/><circle cx="46.1" cy="55.2" r="0.8" fill="#aaa12c"/><circle cx="37.0" cy="51.1" r="2.1" fill="#857e16"/><circle cx="36.5" cy="50.6" r="0.9" fill="#aaa12c"/><circle cx="45.2" cy="0.0" r="2.5" fill="#736d12"/><circle cx="44.6" cy="-0.6" r="1.1" fill="#aaa12c"/><circle cx="46.4" cy="48.3" r="1.8" fill="#736d12"/><circle cx="45.9" cy="47.8" r="0.8" fill="#aaa12c"/><circle cx="18.4" cy="47.7" r="1.8" fill="#938b1c"/><circle cx="18.0" cy="47.2" r="0.8" fill="#aaa12c"/><circle cx="18.7" cy="5.8" r="1.9" fill="#736d12"/><circle cx="18.2" cy="5.3" r="0.9" fill="#aaa12c"/><circle cx="25.9" cy="36.1" r="1.9" fill="#938b1c"/><circle cx="25.4" cy="35.6" r="0.9" fill="#aaa12c"/><circle cx="22.6" cy="53.2" r="1.8" fill="#857e16"/><circle cx="22.1" cy="52.8" r="0.8" fill="#aaa12c"/><circle cx="26.6" cy="48.0" r="2.2" fill="#938b1c"/><circle cx="26.1" cy="47.4" r="1.0" fill="#aaa12c"/><circle cx="24.1" cy="55.0" r="2.4" fill="#857e16"/><circle cx="23.5" cy="54.4" r="1.1" fill="#aaa12c"/><circle cx="-0.1" cy="25.4" r="2.3" fill="#938b1c"/><circle cx="-0.6" cy="24.8" r="1.0" fill="#aaa12c"/><circle cx="29.1" cy="15.3" r="2.0" fill="#857e16"/><circle cx="28.6" cy="14.8" r="0.9" fill="#aaa12c"/><circle cx="49.7" cy="49.5" r="2.5" fill="#857e16"/><circle cx="49.1" cy="48.9" r="1.1" fill="#aaa12c"/><circle cx="46.6" cy="0.7" r="2.4" fill="#938b1c"/><circle cx="46.0" cy="0.1" r="1.1" fill="#aaa12c"/><circle cx="28.7" cy="9.9" r="2.4" fill="#736d12"/><circle cx="28.1" cy="9.3" r="1.1" fill="#aaa12c"/><circle cx="32.6" cy="-1.2" r="2.3" fill="#857e16"/><circle cx="32.0" cy="-1.8" r="1.0" fill="#aaa12c"/><circle cx="28.2" cy="12.3" r="1.7" fill="#938b1c"/><circle cx="27.8" cy="11.9" r="0.8" fill="#aaa12c"/><circle cx="22.8" cy="54.3" r="2.2" fill="#736d12"/><circle cx="22.3" cy="53.8" r="1.0" fill="#aaa12c"/><circle cx="5.5" cy="56.3" r="2.1" fill="#857e16"/><circle cx="5.0" cy="55.8" r="1.0" fill="#aaa12c"/><circle cx="19.1" cy="9.8" r="2.1" fill="#857e16"/><circle cx="18.6" cy="9.3" r="1.0" fill="#aaa12c"/><circle cx="8.3" cy="45.5" r="2.4" fill="#857e16"/><circle cx="7.7" cy="44.9" r="1.1" fill="#aaa12c"/><circle cx="47.4" cy="-1.5" r="2.2" fill="#736d12"/><circle cx="46.9" cy="-2.1" r="1.0" fill="#aaa12c"/><circle cx="1.0" cy="14.3" r="1.9" fill="#938b1c"/><circle cx="0.5" cy="13.8" r="0.9" fill="#aaa12c"/><circle cx="29.2" cy="1.1" r="2.0" fill="#857e16"/><circle cx="28.7" cy="0.6" r="0.9" fill="#aaa12c"/><circle cx="49.4" cy="44.5" r="1.7" fill="#857e16"/><circle cx="49.0" cy="44.1" r="0.8" fill="#aaa12c"/><circle cx="2.1" cy="56.5" r="2.4" fill="#857e16"/><circle cx="1.5" cy="55.9" r="1.1" fill="#aaa12c"/><circle cx="28.9" cy="27.4" r="1.8" fill="#857e16"/><circle cx="28.5" cy="26.9" r="0.8" fill="#aaa12c"/><circle cx="19.1" cy="36.8" r="2.2" fill="#736d12"/><circle cx="18.5" cy="36.3" r="1.0" fill="#aaa12c"/><circle cx="13.9" cy="57.3" r="2.0" fill="#857e16"/><circle cx="13.4" cy="56.8" r="0.9" fill="#aaa12c"/><circle cx="31.3" cy="41.0" r="2.0" fill="#857e16"/><circle cx="30.8" cy="40.5" r="0.9" fill="#aaa12c"/><circle cx="32.0" cy="0.6" r="2.1" fill="#938b1c"/><circle cx="31.5" cy="0.1" r="0.9" fill="#aaa12c"/><circle cx="45.0" cy="20.8" r="2.3" fill="#938b1c"/><circle cx="44.4" cy="20.2" r="1.1" fill="#aaa12c"/><circle cx="51.2" cy="1.2" r="2.2" fill="#938b1c"/><circle cx="50.6" cy="0.6" r="1.0" fill="#aaa12c"/><circle cx="16.9" cy="55.0" r="2.0" fill="#857e16"/><circle cx="16.4" cy="54.5" r="0.9" fill="#aaa12c"/><circle cx="12.7" cy="30.2" r="2.3" fill="#857e16"/><circle cx="12.1" cy="29.6" r="1.0" fill="#aaa12c"/><circle cx="46.2" cy="11.5" r="1.8" fill="#857e16"/><circle cx="45.7" cy="11.0" r="0.8" fill="#aaa12c"/><circle cx="54.2" cy="20.5" r="2.4" fill="#736d12"/><circle cx="53.6" cy="19.8" r="1.1" fill="#aaa12c"/><circle cx="5.3" cy="39.4" r="2.5" fill="#938b1c"/><circle cx="4.7" cy="38.8" r="1.1" fill="#aaa12c"/><circle cx="37.7" cy="51.2" r="2.3" fill="#938b1c"/><circle cx="37.2" cy="50.7" r="1.1" fill="#aaa12c"/><circle cx="4.5" cy="17.1" r="2.1" fill="#938b1c"/><circle cx="4.0" cy="16.6" r="1.0" fill="#aaa12c"/><circle cx="41.0" cy="26.4" r="1.9" fill="#736d12"/><circle cx="40.5" cy="25.9" r="0.8" fill="#aaa12c"/><circle cx="0.7" cy="3.5" r="1.8" fill="#736d12"/><circle cx="0.2" cy="3.1" r="0.8" fill="#aaa12c"/><circle cx="8.7" cy="-0.6" r="2.4" fill="#857e16"/><circle cx="8.2" cy="-1.2" r="1.1" fill="#aaa12c"/><circle cx="-0.5" cy="4.9" r="2.1" fill="#938b1c"/><circle cx="-1.0" cy="4.4" r="0.9" fill="#aaa12c"/><circle cx="55.1" cy="32.7" r="2.3" fill="#857e16"/><circle cx="54.6" cy="32.2" r="1.1" fill="#aaa12c"/><circle cx="57.8" cy="31.8" r="2.1" fill="#857e16"/><circle cx="57.2" cy="31.3" r="1.0" fill="#aaa12c"/><circle cx="4.4" cy="42.9" r="2.4" fill="#857e16"/><circle cx="3.8" cy="42.3" r="1.1" fill="#aaa12c"/><circle cx="31.0" cy="50.2" r="1.8" fill="#857e16"/><circle cx="30.5" cy="49.7" r="0.8" fill="#aaa12c"/><circle cx="12.5" cy="8.8" r="1.9" fill="#938b1c"/><circle cx="12.1" cy="8.3" r="0.9" fill="#aaa12c"/><circle cx="40.0" cy="54.6" r="1.9" fill="#938b1c"/><circle cx="39.5" cy="54.1" r="0.9" fill="#aaa12c"/><circle cx="21.8" cy="19.0" r="2.0" fill="#857e16"/><circle cx="21.3" cy="18.5" r="0.9" fill="#aaa12c"/><circle cx="20.5" cy="12.1" r="2.4" fill="#938b1c"/><circle cx="19.9" cy="11.5" r="1.1" fill="#aaa12c"/><circle cx="56.0" cy="22.9" r="2.2" fill="#938b1c"/><circle cx="55.5" cy="22.4" r="1.0" fill="#aaa12c"/><circle cx="38.4" cy="29.0" r="2.1" fill="#938b1c"/><circle cx="37.9" cy="28.5" r="0.9" fill="#aaa12c"/><circle cx="22.1" cy="51.3" r="1.8" fill="#736d12"/><circle cx="21.6" cy="50.8" r="0.8" fill="#aaa12c"/><circle cx="42.9" cy="53.0" r="2.1" fill="#736d12"/><circle cx="42.4" cy="52.5" r="1.0" fill="#aaa12c"/><circle cx="33.2" cy="49.5" r="1.8" fill="#857e16"/><circle cx="32.7" cy="49.0" r="0.8" fill="#aaa12c"/><circle cx="6.8" cy="28.9" r="2.4" fill="#938b1c"/><circle cx="6.2" cy="28.3" r="1.1" fill="#aaa12c"/><circle cx="30.3" cy="44.8" r="2.2" fill="#736d12"/><circle cx="29.7" cy="44.2" r="1.0" fill="#aaa12c"/><circle cx="33.7" cy="33.1" r="2.5" fill="#857e16"/><circle cx="33.1" cy="32.5" r="1.1" fill="#aaa12c"/><circle cx="16.4" cy="14.1" r="2.3" fill="#857e16"/><circle cx="15.8" cy="13.5" r="1.1" fill="#aaa12c"/><circle cx="8.3" cy="19.6" r="2.0" fill="#857e16"/><circle cx="7.8" cy="19.1" r="0.9" fill="#aaa12c"/><circle cx="23.1" cy="39.9" r="2.3" fill="#857e16"/><circle cx="22.5" cy="39.3" r="1.0" fill="#aaa12c"/><circle cx="26.1" cy="48.1" r="2.4" fill="#938b1c"/><circle cx="25.5" cy="47.5" r="1.1" fill="#aaa12c"/><circle cx="-0.3" cy="57.6" r="1.8" fill="#736d12"/><circle cx="-0.8" cy="57.1" r="0.8" fill="#aaa12c"/><circle cx="45.0" cy="50.9" r="1.7" fill="#857e16"/><circle cx="44.6" cy="50.5" r="0.8" fill="#aaa12c"/><circle cx="51.5" cy="36.9" r="2.3" fill="#857e16"/><circle cx="50.9" cy="36.3" r="1.0" fill="#aaa12c"/><circle cx="55.5" cy="49.2" r="1.9" fill="#857e16"/><circle cx="55.0" cy="48.8" r="0.9" fill="#aaa12c"/><circle cx="44.5" cy="6.2" r="2.2" fill="#938b1c"/><circle cx="44.0" cy="5.7" r="1.0" fill="#aaa12c"/><circle cx="49.5" cy="52.0" r="1.9" fill="#857e16"/><circle cx="49.0" cy="51.5" r="0.9" fill="#aaa12c"/><circle cx="16.8" cy="23.4" r="2.3" fill="#857e16"/><circle cx="16.2" cy="22.8" r="1.0" fill="#aaa12c"/><circle cx="5.1" cy="13.9" r="2.4" fill="#857e16"/><circle cx="4.5" cy="13.2" r="1.1" fill="#aaa12c"/><circle cx="19.4" cy="32.8" r="2.2" fill="#857e16"/><circle cx="18.8" cy="32.3" r="1.0" fill="#aaa12c"/><circle cx="-0.2" cy="17.9" r="2.0" fill="#857e16"/><circle cx="-0.7" cy="17.4" r="0.9" fill="#aaa12c"/><circle cx="10.6" cy="33.1" r="2.5" fill="#736d12"/><circle cx="10.0" cy="32.5" r="1.1" fill="#aaa12c"/><circle cx="5.5" cy="17.1" r="2.4" fill="#857e16"/><circle cx="4.9" cy="16.5" r="1.1" fill="#aaa12c"/><circle cx="37.9" cy="4.8" r="2.4" fill="#736d12"/><circle cx="37.3" cy="4.1" r="1.1" fill="#aaa12c"/><circle cx="3.8" cy="54.5" r="2.0" fill="#736d12"/><circle cx="3.3" cy="54.0" r="0.9" fill="#aaa12c"/><circle cx="43.4" cy="15.7" r="2.2" fill="#938b1c"/><circle cx="42.9" cy="15.2" r="1.0" fill="#aaa12c"/><circle cx="54.7" cy="47.0" r="1.8" fill="#736d12"/><circle cx="54.2" cy="46.6" r="0.8" fill="#aaa12c"/><circle cx="38.4" cy="30.2" r="1.8" fill="#736d12"/><circle cx="37.9" cy="29.7" r="0.8" fill="#aaa12c"/><circle cx="28.5" cy="1.6" r="1.9" fill="#938b1c"/><circle cx="28.0" cy="1.1" r="0.9" fill="#aaa12c"/><circle cx="32.0" cy="8.9" r="2.2" fill="#938b1c"/><circle cx="31.4" cy="8.4" r="1.0" fill="#aaa12c"/><circle cx="7.0" cy="20.2" r="2.4" fill="#736d12"/><circle cx="6.4" cy="19.6" r="1.1" fill="#aaa12c"/><circle cx="5.4" cy="53.9" r="1.8" fill="#736d12"/><circle cx="4.9" cy="53.5" r="0.8" fill="#aaa12c"/><circle cx="36.7" cy="37.0" r="2.0" fill="#736d12"/><circle cx="36.2" cy="36.5" r="0.9" fill="#aaa12c"/><circle cx="36.8" cy="25.5" r="1.9" fill="#857e16"/><circle cx="36.4" cy="25.0" r="0.9" fill="#aaa12c"/><circle cx="40.3" cy="4.4" r="1.8" fill="#938b1c"/><circle cx="39.9" cy="4.0" r="0.8" fill="#aaa12c"/><circle cx="30.6" cy="42.4" r="2.0" fill="#736d12"/><circle cx="30.1" cy="41.9" r="0.9" fill="#aaa12c"/><circle cx="14.3" cy="1.2" r="1.8" fill="#736d12"/><circle cx="13.8" cy="0.8" r="0.8" fill="#aaa12c"/><circle cx="28.3" cy="12.8" r="2.3" fill="#736d12"/><circle cx="27.7" cy="12.3" r="1.0" fill="#aaa12c"/><circle cx="50.5" cy="54.7" r="2.1" fill="#857e16"/><circle cx="50.0" cy="54.2" r="0.9" fill="#aaa12c"/><circle cx="19.2" cy="48.8" r="1.8" fill="#736d12"/><circle cx="18.7" cy="48.4" r="0.8" fill="#aaa12c"/><circle cx="33.4" cy="38.9" r="2.2" fill="#938b1c"/><circle cx="32.9" cy="38.4" r="1.0" fill="#aaa12c"/><circle cx="4.7" cy="39.9" r="2.2" fill="#938b1c"/><circle cx="4.2" cy="39.4" r="1.0" fill="#aaa12c"/><circle cx="42.6" cy="46.9" r="2.3" fill="#938b1c"/><circle cx="42.0" cy="46.4" r="1.0" fill="#aaa12c"/><circle cx="34.5" cy="49.6" r="2.3" fill="#938b1c"/><circle cx="33.9" cy="49.0" r="1.1" fill="#aaa12c"/><circle cx="29.7" cy="32.1" r="1.9" fill="#736d12"/><circle cx="29.2" cy="31.6" r="0.8" fill="#aaa12c"/><circle cx="20.2" cy="15.6" r="2.4" fill="#736d12"/><circle cx="19.6" cy="15.0" r="1.1" fill="#aaa12c"/><circle cx="51.5" cy="55.0" r="2.0" fill="#938b1c"/><circle cx="51.0" cy="54.5" r="0.9" fill="#aaa12c"/><circle cx="52.4" cy="16.6" r="2.1" fill="#938b1c"/><circle cx="51.8" cy="16.1" r="0.9" fill="#aaa12c"/><circle cx="39.2" cy="16.0" r="2.4" fill="#736d12"/><circle cx="38.6" cy="15.4" r="1.1" fill="#aaa12c"/><circle cx="-0.2" cy="9.4" r="2.2" fill="#857e16"/><circle cx="-0.7" cy="8.9" r="1.0" fill="#aaa12c"/><circle cx="44.2" cy="37.7" r="2.1" fill="#938b1c"/><circle cx="43.7" cy="37.2" r="0.9" fill="#aaa12c"/><circle cx="35.5" cy="9.9" r="2.3" fill="#857e16"/><circle cx="34.9" cy="9.4" r="1.0" fill="#aaa12c"/><circle cx="0.2" cy="28.0" r="2.2" fill="#736d12"/><circle cx="-0.3" cy="27.5" r="1.0" fill="#aaa12c"/><circle cx="4.7" cy="15.0" r="2.2" fill="#857e16"/><circle cx="4.1" cy="14.4" r="1.0" fill="#aaa12c"/><circle cx="6.1" cy="45.5" r="2.2" fill="#857e16"/><circle cx="5.6" cy="45.0" r="1.0" fill="#aaa12c"/><circle cx="-0.5" cy="35.1" r="2.1" fill="#736d12"/><circle cx="-1.0" cy="34.6" r="0.9" fill="#aaa12c"/><circle cx="30.3" cy="53.8" r="2.0" fill="#736d12"/><circle cx="29.8" cy="53.3" r="0.9" fill="#aaa12c"/><circle cx="39.7" cy="6.1" r="2.4" fill="#938b1c"/><circle cx="39.1" cy="5.5" r="1.1" fill="#aaa12c"/><circle cx="44.5" cy="0.0" r="1.8" fill="#736d12"/><circle cx="44.1" cy="-0.4" r="0.8" fill="#aaa12c"/><circle cx="57.9" cy="10.3" r="1.8" fill="#857e16"/><circle cx="57.4" cy="9.9" r="0.8" fill="#aaa12c"/><circle cx="24.2" cy="43.4" r="2.1" fill="#857e16"/><circle cx="23.7" cy="42.9" r="0.9" fill="#aaa12c"/><circle cx="45.2" cy="22.5" r="2.4" fill="#938b1c"/><circle cx="44.6" cy="21.9" r="1.1" fill="#aaa12c"/><circle cx="7.6" cy="27.8" r="2.3" fill="#938b1c"/><circle cx="7.1" cy="27.3" r="1.0" fill="#aaa12c"/><circle cx="49.1" cy="10.5" r="2.1" fill="#857e16"/><circle cx="48.6" cy="10.0" r="0.9" fill="#aaa12c"/><circle cx="25.9" cy="43.4" r="2.0" fill="#857e16"/><circle cx="25.4" cy="42.9" r="0.9" fill="#aaa12c"/><circle cx="25.3" cy="0.2" r="1.9" fill="#736d12"/><circle cx="24.8" cy="-0.2" r="0.9" fill="#aaa12c"/><circle cx="24.9" cy="19.7" r="2.0" fill="#857e16"/><circle cx="24.4" cy="19.2" r="0.9" fill="#aaa12c"/><circle cx="46.3" cy="13.5" r="2.0" fill="#736d12"/><circle cx="45.8" cy="13.0" r="0.9" fill="#aaa12c"/><circle cx="30.0" cy="7.5" r="1.7" fill="#938b1c"/><circle cx="29.6" cy="7.1" r="0.8" fill="#aaa12c"/><circle cx="22.2" cy="8.1" r="1.7" fill="#857e16"/><circle cx="21.8" cy="7.7" r="0.8" fill="#aaa12c"/><circle cx="34.5" cy="24.6" r="1.8" fill="#857e16"/><circle cx="34.1" cy="24.1" r="0.8" fill="#aaa12c"/><circle cx="22.2" cy="17.1" r="1.7" fill="#938b1c"/><circle cx="21.8" cy="16.6" r="0.8" fill="#aaa12c"/><circle cx="1.1" cy="22.2" r="2.0" fill="#857e16"/><circle cx="0.6" cy="21.7" r="0.9" fill="#aaa12c"/><circle cx="52.5" cy="51.0" r="1.9" fill="#736d12"/><circle cx="52.1" cy="50.5" r="0.9" fill="#aaa12c"/><circle cx="26.5" cy="7.9" r="2.2" fill="#736d12"/><circle cx="25.9" cy="7.3" r="1.0" fill="#aaa12c"/><circle cx="52.8" cy="33.7" r="2.3" fill="#736d12"/><circle cx="52.2" cy="33.1" r="1.1" fill="#aaa12c"/><circle cx="14.5" cy="45.3" r="2.1" fill="#736d12"/><circle cx="14.0" cy="44.8" r="0.9" fill="#aaa12c"/><circle cx="27.3" cy="31.7" r="1.7" fill="#736d12"/><circle cx="26.9" cy="31.2" r="0.8" fill="#aaa12c"/><circle cx="35.7" cy="18.7" r="1.8" fill="#938b1c"/><circle cx="35.3" cy="18.2" r="0.8" fill="#aaa12c"/><circle cx="24.1" cy="3.4" r="2.2" fill="#857e16"/><circle cx="23.6" cy="2.8" r="1.0" fill="#aaa12c"/><circle cx="-0.2" cy="3.4" r="1.8" fill="#857e16"/><circle cx="-0.6" cy="3.0" r="0.8" fill="#aaa12c"/><circle cx="26.9" cy="9.3" r="2.1" fill="#736d12"/><circle cx="26.4" cy="8.8" r="0.9" fill="#aaa12c"/><circle cx="10.0" cy="56.4" r="2.1" fill="#736d12"/><circle cx="9.5" cy="55.9" r="0.9" fill="#aaa12c"/><circle cx="53.0" cy="54.4" r="1.7" fill="#736d12"/><circle cx="52.6" cy="54.0" r="0.8" fill="#aaa12c"/><circle cx="43.1" cy="35.9" r="2.0" fill="#736d12"/><circle cx="42.6" cy="35.4" r="0.9" fill="#aaa12c"/><circle cx="9.0" cy="22.8" r="2.1" fill="#938b1c"/><circle cx="8.5" cy="22.3" r="0.9" fill="#aaa12c"/><circle cx="18.1" cy="38.8" r="2.4" fill="#857e16"/><circle cx="17.4" cy="38.2" r="1.1" fill="#aaa12c"/><circle cx="48.2" cy="49.9" r="2.0" fill="#938b1c"/><circle cx="47.7" cy="49.4" r="0.9" fill="#aaa12c"/><circle cx="19.6" cy="9.0" r="2.3" fill="#736d12"/><circle cx="19.0" cy="8.5" r="1.1" fill="#aaa12c"/><circle cx="11.8" cy="44.8" r="2.1" fill="#736d12"/><circle cx="11.2" cy="44.2" r="0.9" fill="#aaa12c"/><circle cx="47.3" cy="28.4" r="2.3" fill="#938b1c"/><circle cx="46.7" cy="27.8" r="1.0" fill="#aaa12c"/><circle cx="39.8" cy="55.0" r="1.7" fill="#857e16"/><circle cx="39.4" cy="54.5" r="0.8" fill="#aaa12c"/><circle cx="40.6" cy="-0.6" r="2.1" fill="#938b1c"/><circle cx="40.1" cy="-1.1" r="0.9" fill="#aaa12c"/><circle cx="38.6" cy="3.8" r="1.9" fill="#938b1c"/><circle cx="38.2" cy="3.4" r="0.9" fill="#aaa12c"/><circle cx="1.4" cy="34.7" r="1.7" fill="#736d12"/><circle cx="1.0" cy="34.3" r="0.8" fill="#aaa12c"/></svg></div>
<div class="th" style="left:65.5px;top:97px"><svg width="56" height="56" viewBox="0 0 56 56"><rect width="56" height="56" fill="#100302"/><circle cx="12.2" cy="4.2" r="1.3" fill="#8f2a16"/><circle cx="3.4" cy="-0.8" r="1.4" fill="#c2441c"/><circle cx="46.0" cy="43.9" r="1.2" fill="#c2441c"/><circle cx="14.6" cy="8.4" r="1.1" fill="#8f2a16"/><circle cx="54.6" cy="-0.5" r="1.4" fill="#c2441c"/><circle cx="46.0" cy="9.6" r="1.2" fill="#c2441c"/><circle cx="3.2" cy="34.4" r="1.5" fill="#8f2a16"/><circle cx="8.7" cy="26.4" r="1.1" fill="#c2441c"/><circle cx="-1.6" cy="15.5" r="1.5" fill="#c2441c"/><circle cx="48.9" cy="28.5" r="1.3" fill="#c2441c"/><circle cx="23.9" cy="7.7" r="1.2" fill="#a93519"/><circle cx="2.9" cy="25.8" r="1.7" fill="#7a2412"/><circle cx="40.1" cy="6.7" r="1.5" fill="#a93519"/><circle cx="22.8" cy="10.2" r="1.4" fill="#c2441c"/><circle cx="9.0" cy="24.2" r="1.4" fill="#8f2a16"/><circle cx="52.3" cy="4.1" r="1.0" fill="#8f2a16"/><circle cx="14.6" cy="32.9" r="1.6" fill="#a93519"/><circle cx="17.9" cy="8.7" r="1.3" fill="#a93519"/><circle cx="19.4" cy="3.0" r="1.7" fill="#c2441c"/><circle cx="42.1" cy="55.6" r="1.0" fill="#c2441c"/><circle cx="17.3" cy="7.2" r="1.5" fill="#a93519"/><circle cx="15.6" cy="9.5" r="1.3" fill="#8f2a16"/><circle cx="13.0" cy="33.9" r="1.1" fill="#a93519"/><circle cx="19.8" cy="25.3" r="1.3" fill="#c2441c"/><circle cx="57.8" cy="32.3" r="1.3" fill="#8f2a16"/><circle cx="23.4" cy="10.5" r="1.0" fill="#a93519"/><circle cx="42.2" cy="33.7" r="1.7" fill="#a93519"/><circle cx="30.8" cy="33.0" r="1.2" fill="#a93519"/><circle cx="5.3" cy="29.8" r="1.5" fill="#7a2412"/><circle cx="37.1" cy="10.0" r="1.1" fill="#7a2412"/><circle cx="22.6" cy="0.2" r="1.3" fill="#8f2a16"/><circle cx="36.8" cy="23.7" r="1.2" fill="#8f2a16"/><circle cx="-0.1" cy="13.3" r="1.2" fill="#8f2a16"/><circle cx="44.3" cy="23.0" r="1.2" fill="#c2441c"/><circle cx="1.1" cy="53.7" r="1.4" fill="#7a2412"/><circle cx="55.8" cy="37.2" r="1.6" fill="#a93519"/><circle cx="27.7" cy="3.6" r="1.1" fill="#8f2a16"/><circle cx="18.2" cy="37.4" r="1.6" fill="#c2441c"/><circle cx="46.9" cy="29.7" r="1.5" fill="#c2441c"/><circle cx="18.3" cy="21.5" r="1.3" fill="#c2441c"/><circle cx="55.7" cy="38.1" r="1.0" fill="#8f2a16"/><circle cx="44.0" cy="14.2" r="1.6" fill="#8f2a16"/><circle cx="39.3" cy="25.9" r="1.3" fill="#7a2412"/><circle cx="53.6" cy="11.1" r="1.0" fill="#8f2a16"/><circle cx="-1.2" cy="50.6" r="1.1" fill="#7a2412"/><circle cx="50.7" cy="31.0" r="1.6" fill="#8f2a16"/><circle cx="7.7" cy="34.5" r="1.6" fill="#7a2412"/><circle cx="52.9" cy="24.4" r="1.1" fill="#a93519"/><circle cx="27.3" cy="49.9" r="1.4" fill="#8f2a16"/><circle cx="0.5" cy="2.8" r="1.6" fill="#a93519"/><circle cx="15.8" cy="18.8" r="1.1" fill="#7a2412"/><circle cx="20.9" cy="45.2" r="1.2" fill="#8f2a16"/><circle cx="43.5" cy="49.3" r="1.3" fill="#a93519"/><circle cx="4.9" cy="35.3" r="1.6" fill="#7a2412"/><circle cx="23.0" cy="40.7" r="1.3" fill="#8f2a16"/><circle cx="36.2" cy="53.8" r="1.3" fill="#a93519"/><circle cx="45.9" cy="8.0" r="1.6" fill="#8f2a16"/><circle cx="40.4" cy="17.6" r="1.6" fill="#c2441c"/><circle cx="30.5" cy="52.2" r="1.5" fill="#a93519"/><circle cx="36.9" cy="5.3" r="1.1" fill="#7a2412"/><circle cx="29.6" cy="29.2" r="1.3" fill="#c2441c"/><circle cx="19.4" cy="44.0" r="1.7" fill="#a93519"/><circle cx="38.6" cy="34.6" r="1.2" fill="#7a2412"/><circle cx="44.9" cy="32.1" r="1.7" fill="#7a2412"/><circle cx="34.8" cy="24.5" r="1.1" fill="#c2441c"/><circle cx="57.2" cy="18.4" r="1.3" fill="#8f2a16"/><circle cx="38.5" cy="35.3" r="1.2" fill="#c2441c"/><circle cx="9.8" cy="45.6" r="1.5" fill="#a93519"/><circle cx="2.6" cy="36.7" r="1.6" fill="#c2441c"/><circle cx="37.3" cy="17.6" r="1.2" fill="#a93519"/><circle cx="34.2" cy="29.4" r="1.5" fill="#a93519"/><circle cx="46.1" cy="46.4" r="1.7" fill="#8f2a16"/><circle cx="8.9" cy="57.2" r="1.5" fill="#a93519"/><circle cx="43.6" cy="56.1" r="1.1" fill="#7a2412"/><circle cx="38.5" cy="42.7" r="1.4" fill="#c2441c"/><circle cx="49.2" cy="39.3" r="1.6" fill="#8f2a16"/><circle cx="51.8" cy="40.2" r="1.2" fill="#8f2a16"/><circle cx="42.7" cy="30.2" r="1.4" fill="#7a2412"/><circle cx="51.9" cy="22.0" r="1.3" fill="#c2441c"/><circle cx="15.0" cy="22.7" r="1.0" fill="#8f2a16"/><circle cx="51.8" cy="25.5" r="1.4" fill="#c2441c"/><circle cx="22.3" cy="21.3" r="1.0" fill="#a93519"/><circle cx="25.5" cy="55.9" r="1.4" fill="#c2441c"/><circle cx="34.2" cy="16.7" r="1.1" fill="#c2441c"/><circle cx="27.0" cy="36.4" r="1.3" fill="#a93519"/><circle cx="6.9" cy="12.3" r="1.2" fill="#a93519"/><circle cx="7.8" cy="45.4" r="1.5" fill="#c2441c"/><circle cx="-0.9" cy="12.7" r="1.5" fill="#8f2a16"/><circle cx="-0.1" cy="17.0" r="1.1" fill="#a93519"/><circle cx="50.7" cy="36.6" r="1.4" fill="#8f2a16"/><circle cx="41.9" cy="37.3" r="1.7" fill="#a93519"/><circle cx="31.6" cy="39.6" r="1.5" fill="#8f2a16"/><circle cx="28.2" cy="7.3" r="1.6" fill="#7a2412"/><circle cx="28.5" cy="20.6" r="1.1" fill="#c2441c"/><circle cx="28.9" cy="30.2" r="1.2" fill="#7a2412"/><circle cx="17.7" cy="21.2" r="1.3" fill="#a93519"/><circle cx="14.7" cy="38.6" r="1.2" fill="#8f2a16"/><circle cx="3.1" cy="5.0" r="1.4" fill="#a93519"/><circle cx="11.9" cy="31.2" r="1.3" fill="#8f2a16"/><circle cx="51.1" cy="25.1" r="1.5" fill="#7a2412"/><circle cx="18.2" cy="8.4" r="1.4" fill="#8f2a16"/><circle cx="4.4" cy="35.2" r="1.6" fill="#c2441c"/><circle cx="53.8" cy="47.9" r="1.3" fill="#a93519"/><circle cx="47.2" cy="10.7" r="1.4" fill="#c2441c"/><circle cx="45.1" cy="26.6" r="1.6" fill="#a93519"/><circle cx="51.5" cy="51.6" r="1.6" fill="#a93519"/><circle cx="34.3" cy="29.6" r="1.7" fill="#c2441c"/><circle cx="53.7" cy="8.6" r="1.0" fill="#8f2a16"/><circle cx="0.3" cy="38.6" r="1.2" fill="#8f2a16"/><circle cx="39.8" cy="5.0" r="1.7" fill="#a93519"/><circle cx="2.3" cy="11.6" r="1.2" fill="#a93519"/><circle cx="51.4" cy="56.4" r="1.0" fill="#8f2a16"/><circle cx="10.8" cy="13.0" r="1.5" fill="#c2441c"/><circle cx="47.0" cy="15.9" r="1.3" fill="#7a2412"/><circle cx="0.0" cy="22.7" r="1.7" fill="#c2441c"/><circle cx="31.6" cy="15.0" r="1.1" fill="#7a2412"/><circle cx="17.3" cy="10.9" r="1.3" fill="#7a2412"/><circle cx="53.9" cy="14.6" r="1.5" fill="#7a2412"/><circle cx="55.0" cy="53.7" r="1.3" fill="#8f2a16"/><circle cx="13.4" cy="28.7" r="1.0" fill="#c2441c"/><circle cx="34.5" cy="38.5" r="1.4" fill="#c2441c"/><circle cx="3.2" cy="57.2" r="1.1" fill="#a93519"/><circle cx="40.1" cy="54.1" r="1.2" fill="#8f2a16"/><circle cx="51.4" cy="28.0" r="1.1" fill="#c2441c"/><circle cx="-1.5" cy="32.2" r="1.1" fill="#a93519"/><circle cx="12.6" cy="48.6" r="1.1" fill="#c2441c"/><circle cx="15.8" cy="32.0" r="1.5" fill="#a93519"/><circle cx="37.7" cy="57.6" r="1.6" fill="#a93519"/><circle cx="43.4" cy="46.1" r="1.5" fill="#c2441c"/><circle cx="0.1" cy="17.5" r="1.2" fill="#c2441c"/><circle cx="57.2" cy="7.7" r="1.5" fill="#a93519"/><circle cx="55.4" cy="55.1" r="1.5" fill="#a93519"/><circle cx="38.4" cy="13.7" r="1.6" fill="#7a2412"/><circle cx="4.3" cy="10.0" r="1.1" fill="#7a2412"/><circle cx="34.1" cy="27.8" r="1.2" fill="#7a2412"/><circle cx="42.6" cy="48.3" r="1.5" fill="#a93519"/><circle cx="8.9" cy="19.5" r="1.2" fill="#c2441c"/><circle cx="32.4" cy="9.7" r="1.4" fill="#c2441c"/><circle cx="21.0" cy="30.1" r="1.1" fill="#8f2a16"/><circle cx="9.4" cy="18.9" r="1.7" fill="#8f2a16"/><circle cx="-0.7" cy="5.1" r="1.2" fill="#c2441c"/><circle cx="54.3" cy="27.8" r="1.0" fill="#c2441c"/><circle cx="46.0" cy="46.1" r="1.1" fill="#7a2412"/><circle cx="35.0" cy="19.0" r="1.0" fill="#8f2a16"/><circle cx="24.8" cy="42.6" r="1.6" fill="#7a2412"/><circle cx="10.7" cy="17.8" r="1.4" fill="#a93519"/><circle cx="51.7" cy="26.9" r="1.7" fill="#a93519"/><circle cx="8.9" cy="34.9" r="1.4" fill="#a93519"/><circle cx="41.5" cy="-0.6" r="1.3" fill="#8f2a16"/><circle cx="35.3" cy="6.0" r="1.4" fill="#8f2a16"/><circle cx="24.1" cy="16.9" r="1.4" fill="#8f2a16"/><circle cx="41.8" cy="53.7" r="1.6" fill="#c2441c"/><circle cx="13.5" cy="18.1" r="1.4" fill="#8f2a16"/><circle cx="19.9" cy="49.8" r="1.1" fill="#7a2412"/><circle cx="47.7" cy="2.4" r="1.4" fill="#8f2a16"/><circle cx="57.3" cy="6.6" r="1.5" fill="#a93519"/><circle cx="30.3" cy="18.8" r="1.7" fill="#a93519"/><circle cx="45.1" cy="34.3" r="1.4" fill="#c2441c"/><circle cx="35.5" cy="15.7" r="1.6" fill="#c2441c"/><circle cx="10.5" cy="26.3" r="1.2" fill="#a93519"/><circle cx="51.3" cy="15.3" r="1.3" fill="#a93519"/><circle cx="18.8" cy="34.2" r="1.6" fill="#c2441c"/><circle cx="2.3" cy="24.0" r="1.1" fill="#7a2412"/><circle cx="45.3" cy="-0.1" r="1.1" fill="#8f2a16"/><circle cx="47.1" cy="10.1" r="1.6" fill="#a93519"/><circle cx="57.9" cy="-1.4" r="1.0" fill="#c2441c"/><circle cx="29.2" cy="29.5" r="1.0" fill="#c2441c"/><circle cx="38.1" cy="35.8" r="1.4" fill="#a93519"/><circle cx="39.4" cy="1.9" r="1.3" fill="#8f2a16"/><circle cx="51.5" cy="55.9" r="1.4" fill="#c2441c"/><circle cx="37.9" cy="6.0" r="1.4" fill="#a93519"/><circle cx="34.1" cy="-1.7" r="1.0" fill="#c2441c"/><circle cx="30.7" cy="23.5" r="1.2" fill="#c2441c"/><circle cx="55.8" cy="7.2" r="1.3" fill="#7a2412"/><circle cx="12.9" cy="35.5" r="1.1" fill="#7a2412"/><circle cx="57.9" cy="32.8" r="1.0" fill="#8f2a16"/><circle cx="13.7" cy="33.2" r="1.4" fill="#7a2412"/><circle cx="54.6" cy="7.7" r="1.1" fill="#c2441c"/><circle cx="49.0" cy="40.3" r="1.4" fill="#c2441c"/><circle cx="14.1" cy="49.6" r="1.1" fill="#a93519"/><circle cx="49.8" cy="45.9" r="1.2" fill="#8f2a16"/><circle cx="8.6" cy="3.7" r="1.7" fill="#a93519"/><circle cx="29.3" cy="0.8" r="1.7" fill="#8f2a16"/><circle cx="11.4" cy="12.7" r="1.7" fill="#7a2412"/><circle cx="21.2" cy="36.0" r="1.7" fill="#7a2412"/><circle cx="15.4" cy="3.3" r="1.6" fill="#a93519"/><circle cx="9.1" cy="22.4" r="1.3" fill="#8f2a16"/><circle cx="24.1" cy="42.2" r="1.4" fill="#c2441c"/><circle cx="18.6" cy="19.0" r="1.5" fill="#a93519"/><circle cx="18.8" cy="3.8" r="1.3" fill="#8f2a16"/><circle cx="27.4" cy="54.2" r="1.3" fill="#a93519"/><circle cx="21.5" cy="3.2" r="1.3" fill="#8f2a16"/><circle cx="43.1" cy="3.5" r="1.1" fill="#8f2a16"/><circle cx="25.4" cy="42.3" r="1.5" fill="#7a2412"/><circle cx="17.1" cy="38.2" r="1.6" fill="#7a2412"/><circle cx="51.8" cy="41.7" r="1.6" fill="#c2441c"/><circle cx="50.9" cy="56.8" r="1.6" fill="#7a2412"/><circle cx="24.1" cy="41.0" r="1.6" fill="#8f2a16"/><circle cx="53.5" cy="15.1" r="1.2" fill="#a93519"/><circle cx="29.2" cy="44.6" r="1.6" fill="#8f2a16"/><circle cx="34.8" cy="44.5" r="1.2" fill="#c2441c"/><circle cx="53.4" cy="24.4" r="1.4" fill="#a93519"/><circle cx="27.7" cy="54.5" r="1.6" fill="#7a2412"/><circle cx="43.8" cy="26.2" r="1.5" fill="#c2441c"/><circle cx="9.8" cy="18.0" r="1.1" fill="#7a2412"/><circle cx="44.4" cy="45.5" r="1.7" fill="#7a2412"/><circle cx="42.5" cy="18.9" r="1.4" fill="#a93519"/><circle cx="42.5" cy="38.1" r="1.2" fill="#8f2a16"/><circle cx="51.0" cy="30.2" r="1.6" fill="#7a2412"/><circle cx="55.3" cy="50.2" r="1.2" fill="#a93519"/><circle cx="-1.9" cy="12.0" r="1.2" fill="#c2441c"/><circle cx="47.0" cy="48.3" r="1.4" fill="#c2441c"/><circle cx="45.7" cy="38.1" r="1.0" fill="#a93519"/><circle cx="41.3" cy="36.3" r="1.2" fill="#a93519"/><circle cx="30.7" cy="7.8" r="1.1" fill="#8f2a16"/><circle cx="28.8" cy="9.4" r="1.7" fill="#7a2412"/><circle cx="17.6" cy="13.9" r="1.3" fill="#8f2a16"/><circle cx="40.5" cy="52.9" r="1.2" fill="#a93519"/><circle cx="35.0" cy="13.8" r="1.0" fill="#c2441c"/><circle cx="52.1" cy="1.4" r="1.5" fill="#a93519"/><circle cx="10.4" cy="12.9" r="1.3" fill="#7a2412"/><circle cx="20.0" cy="54.5" r="1.5" fill="#a93519"/><circle cx="48.7" cy="41.5" r="1.6" fill="#7a2412"/><circle cx="28.8" cy="20.5" r="1.5" fill="#8f2a16"/><circle cx="6.7" cy="8.2" r="1.3" fill="#7a2412"/><circle cx="49.3" cy="20.0" r="1.4" fill="#8f2a16"/><circle cx="49.3" cy="13.0" r="1.4" fill="#c2441c"/><circle cx="21.9" cy="31.8" r="1.6" fill="#c2441c"/><circle cx="45.1" cy="40.3" r="1.1" fill="#8f2a16"/><circle cx="54.1" cy="55.7" r="1.5" fill="#7a2412"/><circle cx="37.7" cy="5.7" r="1.1" fill="#8f2a16"/><circle cx="31.7" cy="2.3" r="1.5" fill="#c2441c"/><circle cx="-0.1" cy="28.3" r="1.5" fill="#a93519"/><circle cx="14.7" cy="47.6" r="1.5" fill="#8f2a16"/><circle cx="5.0" cy="13.3" r="1.3" fill="#c2441c"/><circle cx="-1.6" cy="21.9" r="1.4" fill="#8f2a16"/><circle cx="42.2" cy="34.1" r="1.5" fill="#8f2a16"/><circle cx="49.0" cy="27.4" r="1.2" fill="#8f2a16"/><circle cx="18.0" cy="-0.1" r="1.1" fill="#7a2412"/><circle cx="54.5" cy="17.4" r="1.4" fill="#c2441c"/><circle cx="32.7" cy="23.8" r="1.5" fill="#c2441c"/><circle cx="17.7" cy="52.8" r="1.5" fill="#a93519"/><circle cx="46.3" cy="27.1" r="1.2" fill="#a93519"/><circle cx="40.6" cy="13.3" r="1.3" fill="#7a2412"/><circle cx="39.8" cy="25.4" r="1.2" fill="#a93519"/><circle cx="34.1" cy="34.7" r="1.1" fill="#8f2a16"/><circle cx="38.6" cy="26.9" r="1.0" fill="#8f2a16"/><circle cx="35.6" cy="21.9" r="1.1" fill="#7a2412"/><circle cx="40.9" cy="25.5" r="1.3" fill="#c2441c"/><circle cx="24.2" cy="39.7" r="1.0" fill="#a93519"/><circle cx="44.7" cy="31.1" r="1.5" fill="#a93519"/><circle cx="29.9" cy="18.0" r="1.5" fill="#a93519"/><circle cx="5.6" cy="1.1" r="1.5" fill="#7a2412"/><circle cx="46.1" cy="12.9" r="1.3" fill="#7a2412"/><circle cx="32.6" cy="21.3" r="1.1" fill="#7a2412"/><circle cx="22.4" cy="13.1" r="1.1" fill="#7a2412"/><circle cx="29.8" cy="20.1" r="1.4" fill="#8f2a16"/><circle cx="6.9" cy="35.4" r="1.4" fill="#8f2a16"/><circle cx="1.8" cy="38.3" r="1.6" fill="#a93519"/><circle cx="52.3" cy="40.7" r="1.4" fill="#8f2a16"/></svg></div>
<div class="th" style="left:0.5px;top:166px"><svg width="56" height="56" viewBox="0 0 231 231"><use href="#mall"/></svg></div>
<div class="th" style="left:65.5px;top:166px"><svg width="56" height="56" viewBox="0 0 56 56"><rect width="56" height="56" fill="#040404"/><path d="M0 0H30L20 16 10 30 0 34z" fill="#22404a"/><path d="M30 0C34 8 44 14 40 24 36 34 24 40 26 56H56V0z" fill="#9a9511"/><path d="M6 0C12 12 19 20 17 32 15 42 18 50 24 56h6C24 46 24 38 28 30 34 20 26 10 22 0z" fill="#2f5f6c"/><path d="M11 0c4 10 10 18 9 28s-4 18 1 28h2c-4-10-1-18 1-26 3-10-5-20-9-30z" fill="#45bfe6"/><path d="M23 0c4 8 10 14 8 24l2 2c4-10 0-18-5-26z" fill="#45bfe6"/><path d="M36 6c5-1 8 3 6 7-3-4-6-3-7 0-1-3-1-6 1-7z" fill="#2f5f6c"/><path d="M22 50c-3-4 2-8 5-5-3 0-4 3-2 5z" fill="#2f5f6c"/></svg></div>
<div class="th" style="left:0.5px;top:235px"><svg width="56" height="56" viewBox="0 0 56 56"><rect width="56" height="56" fill="#f8b2d2"/><path d="M20 28L0 2V0H8z" fill="#3f9a2a"/><path d="M20 28L12 0h8z" fill="#8cc66a"/><path d="M20 28L24 0h4z" fill="#9aaa8c"/><path d="M20 28L32 0h12z" fill="#3f9a2a"/><path d="M20 28L47 0h5z" fill="#a8cc8a"/><path d="M20 28L0 8v8z" fill="#7cbc5a"/><path d="M20 28L0 22v8z" fill="#2f8a22"/><path d="M20 28L0 34V52z" fill="#1f8a1c"/><path d="M20 28L0 52v4h3z" fill="#e8c040"/><path d="M6 56l8-22 3 2-6 20z" fill="#f6c0a8"/></svg></div>
<div class="th" style="left:65.5px;top:235px"><svg width="56" height="56" viewBox="0 0 56 56"><rect width="56" height="56" fill="#f8a6c6"/><path d="M36 36L30 0H56V24z" fill="#f7a456"/><path d="M36 36L56 22V56H44z" fill="#f8ba2c"/><path d="M36 36L44 56H28z" fill="#5ed68c"/><path d="M36 36L0 30V42z" fill="#f0307c"/><path d="M36 36L0 44v4zM36 36L0 50v3zM36 36L4 56h5z" fill="#8d929a"/><path d="M36 36L0 48v2zM36 36L10 56h6zM36 36L20 56h8z" fill="#58d8a0"/><path d="M36 36L0 6v3zM36 36L0 16v3zM36 36L6 0h4zM36 36L18 0h3zM36 36L0 24v3z" fill="#58d8a0"/><path d="M36 36L0 11v2zM36 36L12 0h3zM36 36L24 0h2z" fill="#f6a060"/><path d="M36 36L56 30v5zM36 36L50 0h3z" fill="#f08a78"/><circle cx="36" cy="37" r="4" fill="#6fd89c"/><circle cx="39" cy="42" r="2.5" fill="#e8605c"/><path d="M48 56l8-8v8z" fill="#8ad85c"/></svg></div>
<div class="th" style="left:0.5px;top:304px"><svg width="56" height="56" viewBox="0 0 56 56"><rect width="56" height="56" fill="#86c00f"/><g stroke="#b4de58" stroke-width=".7" fill="none"><path d="M0 8L56 30M2 0L20 56M0 14L56 50M30 0L56 16M36 0L48 56M0 40L30 56"/></g></svg></div>
<div class="th" style="left:65.5px;top:304px"><svg width="56" height="56" viewBox="0 0 56 56"><rect width="56" height="56" fill="#133842"/><g stroke="#1e6a72" stroke-width="1" fill="none"><path d="M6 1v5h-5"/><path d="M9 3h3v4"/><path d="M17 3h3v4"/><path d="M25 6v-5h5"/><path d="M33 6v-5h5"/><path d="M41 1h5v5"/><path d="M49 3h3v4"/><path d="M6 9v5h-5"/><path d="M9 9h5v5"/><path d="M17 11h3v4"/><path d="M25 9h5v5"/><path d="M38 9v5h-5"/><path d="M41 14v-5h5"/><path d="M54 9v5h-5"/><path d="M6 17v5h-5"/><path d="M9 22v-5h5"/><path d="M17 22v-5h5"/><path d="M25 22v-5h5"/><path d="M33 17h5v5"/><path d="M41 17h5v5"/><path d="M49 22v-5h5"/><path d="M1 25h5v5"/><path d="M14 25v5h-5"/><path d="M17 25h5v5"/><path d="M25 27h3v4"/><path d="M33 30v-5h5"/><path d="M41 30v-5h5"/><path d="M54 25v5h-5"/><path d="M1 33h5v5"/><path d="M9 35h3v4"/><path d="M17 38v-5h5"/><path d="M30 33v5h-5"/><path d="M33 35h3v4"/><path d="M41 35h3v4"/><path d="M49 33h5v5"/><path d="M1 46v-5h5"/><path d="M9 41h5v5"/><path d="M22 41v5h-5"/><path d="M25 41h5v5"/><path d="M38 41v5h-5"/><path d="M46 41v5h-5"/><path d="M49 46v-5h5"/><path d="M1 49h5v5"/><path d="M9 54v-5h5"/><path d="M22 49v5h-5"/><path d="M25 49h5v5"/><path d="M33 49h5v5"/><path d="M41 49h5v5"/><path d="M49 54v-5h5"/></g><circle cx="32.3" cy="23.7" r="0.7" fill="#2a8088"/><circle cx="25.8" cy="27.5" r="0.6" fill="#2a8088"/><circle cx="0.1" cy="27.4" r="0.5" fill="#0c2830"/><circle cx="0.7" cy="49.6" r="0.7" fill="#0c2830"/><circle cx="23.3" cy="47.6" r="0.6" fill="#2a8088"/><circle cx="39.2" cy="37.7" r="0.6" fill="#2a8088"/><circle cx="56.2" cy="34.8" r="0.5" fill="#2a8088"/><circle cx="12.1" cy="9.7" r="0.9" fill="#0c2830"/><circle cx="44.3" cy="12.4" r="0.8" fill="#0c2830"/><circle cx="24.2" cy="1.9" r="0.7" fill="#2a8088"/><circle cx="48.5" cy="56.2" r="0.6" fill="#2a8088"/><circle cx="27.8" cy="47.1" r="0.8" fill="#2a8088"/><circle cx="7.0" cy="32.0" r="0.6" fill="#2a8088"/><circle cx="4.8" cy="44.5" r="0.5" fill="#2a8088"/><circle cx="56.9" cy="9.5" r="0.6" fill="#0c2830"/><circle cx="24.7" cy="38.8" r="0.6" fill="#2a8088"/><circle cx="49.9" cy="14.0" r="0.6" fill="#2a8088"/><circle cx="44.7" cy="26.8" r="0.6" fill="#0c2830"/><circle cx="11.4" cy="30.7" r="0.5" fill="#0c2830"/><circle cx="12.6" cy="13.7" r="0.7" fill="#2a8088"/><circle cx="21.4" cy="50.2" r="0.8" fill="#2a8088"/><circle cx="42.2" cy="57.5" r="0.6" fill="#0c2830"/><circle cx="34.1" cy="1.8" r="0.7" fill="#0c2830"/><circle cx="51.9" cy="6.1" r="0.7" fill="#0c2830"/><circle cx="30.3" cy="27.4" r="0.6" fill="#0c2830"/><circle cx="3.9" cy="56.4" r="0.8" fill="#2a8088"/><circle cx="24.3" cy="1.9" r="0.6" fill="#2a8088"/><circle cx="4.5" cy="25.2" r="0.9" fill="#0c2830"/><circle cx="6.4" cy="49.7" r="0.8" fill="#0c2830"/><circle cx="18.6" cy="13.5" r="0.8" fill="#0c2830"/><circle cx="23.4" cy="37.0" r="0.9" fill="#2a8088"/><circle cx="42.4" cy="17.4" r="0.5" fill="#2a8088"/><circle cx="36.6" cy="33.3" r="0.8" fill="#0c2830"/><circle cx="-0.5" cy="5.0" r="0.6" fill="#2a8088"/><circle cx="41.1" cy="51.3" r="0.5" fill="#2a8088"/><circle cx="56.9" cy="15.1" r="0.8" fill="#2a8088"/><circle cx="19.7" cy="22.0" r="0.8" fill="#0c2830"/><circle cx="9.0" cy="33.5" r="0.7" fill="#2a8088"/><circle cx="39.1" cy="16.5" r="0.9" fill="#0c2830"/><circle cx="24.9" cy="42.6" r="0.6" fill="#0c2830"/></svg></div>
<div class="th" style="left:0.5px;top:373px"><svg width="56" height="56" viewBox="0 0 56 56"><rect width="56" height="56" fill="#8e96f6"/><g stroke="#a9b0fa" stroke-width="1" fill="none"><path d="M6 1v5h-5"/><path d="M14 1v5h-5"/><path d="M22 1v5h-5"/><path d="M25 6v-5h5"/><path d="M33 6v-5h5"/><path d="M46 1v5h-5"/><path d="M49 6v-5h5"/><path d="M1 9h5v5"/><path d="M14 9v5h-5"/><path d="M17 11h3v4"/><path d="M25 14v-5h5"/><path d="M33 9h5v5"/><path d="M41 9h5v5"/><path d="M54 9v5h-5"/><path d="M6 17v5h-5"/><path d="M9 22v-5h5"/><path d="M17 17h5v5"/><path d="M25 17h5v5"/><path d="M33 17h5v5"/><path d="M41 17h5v5"/><path d="M49 22v-5h5"/><path d="M1 30v-5h5"/><path d="M9 25h5v5"/><path d="M22 25v5h-5"/><path d="M25 27h3v4"/><path d="M38 25v5h-5"/><path d="M41 30v-5h5"/><path d="M49 30v-5h5"/><path d="M1 35h3v4"/><path d="M14 33v5h-5"/><path d="M17 33h5v5"/><path d="M25 33h5v5"/><path d="M38 33v5h-5"/><path d="M41 35h3v4"/><path d="M54 33v5h-5"/><path d="M1 41h5v5"/><path d="M9 43h3v4"/><path d="M17 43h3v4"/><path d="M25 46v-5h5"/><path d="M33 43h3v4"/><path d="M41 41h5v5"/><path d="M49 41h5v5"/><path d="M1 49h5v5"/><path d="M14 49v5h-5"/><path d="M17 49h5v5"/><path d="M25 51h3v4"/><path d="M38 49v5h-5"/><path d="M41 49h5v5"/><path d="M49 49h5v5"/></g><g stroke="#b47fd8" stroke-width="1" fill="none"><path d="M42 0h4v3"/><path d="M10 46h4v3"/><path d="M23 49h4v3"/><path d="M20 4h4v3"/><path d="M31 39h4v3"/><path d="M13 4h4v3"/><path d="M17 48h4v3"/><path d="M38 6h4v3"/><path d="M12 5h4v3"/></g></svg></div>
<div class="th" style="left:65.5px;top:373px"><svg width="56" height="56" viewBox="0 0 56 56"><rect width="56" height="56" fill="#ef2fb6"/><circle cx="0" cy="2" r="1.1" fill="#f7a6e2"/><circle cx="5" cy="2" r="1.1" fill="#f7a6e2"/><circle cx="10" cy="2" r="1.1" fill="#f7a6e2"/><circle cx="15" cy="2" r="1.1" fill="#f7a6e2"/><circle cx="20" cy="2" r="1.1" fill="#f7a6e2"/><circle cx="25" cy="2" r="1.1" fill="#f7a6e2"/><circle cx="30" cy="2" r="1.1" fill="#f7a6e2"/><circle cx="35" cy="2" r="1.1" fill="#f7a6e2"/><circle cx="40" cy="2" r="1.1" fill="#f7a6e2"/><circle cx="45" cy="2" r="1.1" fill="#f7a6e2"/><circle cx="50" cy="2" r="1.1" fill="#f7a6e2"/><circle cx="55" cy="2" r="1.1" fill="#f7a6e2"/><circle cx="2.5" cy="6" r="1.1" fill="#f7a6e2"/><circle cx="7.5" cy="6" r="1.1" fill="#f7a6e2"/><circle cx="12.5" cy="6" r="1.1" fill="#f7a6e2"/><circle cx="17.5" cy="6" r="1.1" fill="#f7a6e2"/><circle cx="22.5" cy="6" r="1.1" fill="#f7a6e2"/><circle cx="27.5" cy="6" r="1.1" fill="#f7a6e2"/><circle cx="32.5" cy="6" r="1.1" fill="#f7a6e2"/><circle cx="37.5" cy="6" r="1.1" fill="#f7a6e2"/><circle cx="42.5" cy="6" r="1.1" fill="#f7a6e2"/><circle cx="47.5" cy="6" r="1.1" fill="#f7a6e2"/><circle cx="52.5" cy="6" r="1.1" fill="#f7a6e2"/><circle cx="57.5" cy="6" r="1.1" fill="#f7a6e2"/><circle cx="0" cy="10" r="1.1" fill="#f7a6e2"/><circle cx="5" cy="10" r="1.1" fill="#f7a6e2"/><circle cx="10" cy="10" r="1.1" fill="#f7a6e2"/><circle cx="15" cy="10" r="1.1" fill="#f7a6e2"/><circle cx="20" cy="10" r="1.1" fill="#f7a6e2"/><circle cx="25" cy="10" r="1.1" fill="#f7a6e2"/><circle cx="30" cy="10" r="1.1" fill="#f7a6e2"/><circle cx="35" cy="10" r="1.1" fill="#f7a6e2"/><circle cx="40" cy="10" r="1.1" fill="#f7a6e2"/><circle cx="45" cy="10" r="1.1" fill="#f7a6e2"/><circle cx="50" cy="10" r="1.1" fill="#f7a6e2"/><circle cx="55" cy="10" r="1.1" fill="#f7a6e2"/><circle cx="2.5" cy="14" r="1.1" fill="#f7a6e2"/><circle cx="7.5" cy="14" r="1.1" fill="#f7a6e2"/><circle cx="12.5" cy="14" r="1.1" fill="#f7a6e2"/><circle cx="17.5" cy="14" r="1.1" fill="#f7a6e2"/><circle cx="22.5" cy="14" r="1.1" fill="#f7a6e2"/><circle cx="27.5" cy="14" r="1.1" fill="#f7a6e2"/><circle cx="32.5" cy="14" r="1.1" fill="#f7a6e2"/><circle cx="37.5" cy="14" r="1.1" fill="#f7a6e2"/><circle cx="42.5" cy="14" r="1.1" fill="#f7a6e2"/><circle cx="47.5" cy="14" r="1.1" fill="#f7a6e2"/><circle cx="52.5" cy="14" r="1.1" fill="#f7a6e2"/><circle cx="57.5" cy="14" r="1.1" fill="#f7a6e2"/><circle cx="0" cy="18" r="1.1" fill="#f7a6e2"/><circle cx="5" cy="18" r="1.1" fill="#f7a6e2"/><circle cx="10" cy="18" r="1.1" fill="#f7a6e2"/><circle cx="15" cy="18" r="1.1" fill="#f7a6e2"/><circle cx="20" cy="18" r="1.1" fill="#f7a6e2"/><circle cx="25" cy="18" r="1.1" fill="#f7a6e2"/><circle cx="30" cy="18" r="1.1" fill="#f7a6e2"/><circle cx="35" cy="18" r="1.1" fill="#f7a6e2"/><circle cx="40" cy="18" r="1.1" fill="#f7a6e2"/><circle cx="45" cy="18" r="1.1" fill="#f7a6e2"/><circle cx="50" cy="18" r="1.1" fill="#f7a6e2"/><circle cx="55" cy="18" r="1.1" fill="#f7a6e2"/><circle cx="2.5" cy="22" r="1.1" fill="#f7a6e2"/><circle cx="7.5" cy="22" r="1.1" fill="#f7a6e2"/><circle cx="12.5" cy="22" r="1.1" fill="#f7a6e2"/><circle cx="17.5" cy="22" r="1.1" fill="#f7a6e2"/><circle cx="22.5" cy="22" r="1.1" fill="#f7a6e2"/><circle cx="27.5" cy="22" r="1.1" fill="#f7a6e2"/><circle cx="32.5" cy="22" r="1.1" fill="#f7a6e2"/><circle cx="37.5" cy="22" r="1.1" fill="#f7a6e2"/><circle cx="42.5" cy="22" r="1.1" fill="#f7a6e2"/><circle cx="47.5" cy="22" r="1.1" fill="#f7a6e2"/><circle cx="52.5" cy="22" r="1.1" fill="#f7a6e2"/><circle cx="57.5" cy="22" r="1.1" fill="#f7a6e2"/><circle cx="0" cy="26" r="1.1" fill="#f7a6e2"/><circle cx="5" cy="26" r="1.1" fill="#f7a6e2"/><circle cx="10" cy="26" r="1.1" fill="#f7a6e2"/><circle cx="15" cy="26" r="1.1" fill="#f7a6e2"/><circle cx="20" cy="26" r="1.1" fill="#f7a6e2"/><circle cx="25" cy="26" r="1.1" fill="#f7a6e2"/><circle cx="30" cy="26" r="1.1" fill="#f7a6e2"/><circle cx="35" cy="26" r="1.1" fill="#f7a6e2"/><circle cx="40" cy="26" r="1.1" fill="#f7a6e2"/><circle cx="45" cy="26" r="1.1" fill="#f7a6e2"/><circle cx="50" cy="26" r="1.1" fill="#f7a6e2"/><circle cx="55" cy="26" r="1.1" fill="#f7a6e2"/><circle cx="2.5" cy="30" r="1.1" fill="#f7a6e2"/><circle cx="7.5" cy="30" r="1.1" fill="#f7a6e2"/><circle cx="12.5" cy="30" r="1.1" fill="#f7a6e2"/><circle cx="17.5" cy="30" r="1.1" fill="#f7a6e2"/><circle cx="22.5" cy="30" r="1.1" fill="#f7a6e2"/><circle cx="27.5" cy="30" r="1.1" fill="#f7a6e2"/><circle cx="32.5" cy="30" r="1.1" fill="#f7a6e2"/><circle cx="37.5" cy="30" r="1.1" fill="#f7a6e2"/><circle cx="42.5" cy="30" r="1.1" fill="#f7a6e2"/><circle cx="47.5" cy="30" r="1.1" fill="#f7a6e2"/><circle cx="52.5" cy="30" r="1.1" fill="#f7a6e2"/><circle cx="57.5" cy="30" r="1.1" fill="#f7a6e2"/><circle cx="0" cy="34" r="1.1" fill="#f7a6e2"/><circle cx="5" cy="34" r="1.1" fill="#f7a6e2"/><circle cx="10" cy="34" r="1.1" fill="#f7a6e2"/><circle cx="15" cy="34" r="1.1" fill="#f7a6e2"/><circle cx="20" cy="34" r="1.1" fill="#f7a6e2"/><circle cx="25" cy="34" r="1.1" fill="#f7a6e2"/><circle cx="30" cy="34" r="1.1" fill="#f7a6e2"/><circle cx="35" cy="34" r="1.1" fill="#f7a6e2"/><circle cx="40" cy="34" r="1.1" fill="#f7a6e2"/><circle cx="45" cy="34" r="1.1" fill="#f7a6e2"/><circle cx="50" cy="34" r="1.1" fill="#f7a6e2"/><circle cx="55" cy="34" r="1.1" fill="#f7a6e2"/><circle cx="2.5" cy="38" r="1.1" fill="#f7a6e2"/><circle cx="7.5" cy="38" r="1.1" fill="#f7a6e2"/><circle cx="12.5" cy="38" r="1.1" fill="#f7a6e2"/><circle cx="17.5" cy="38" r="1.1" fill="#f7a6e2"/><circle cx="22.5" cy="38" r="1.1" fill="#f7a6e2"/><circle cx="27.5" cy="38" r="1.1" fill="#f7a6e2"/><circle cx="32.5" cy="38" r="1.1" fill="#f7a6e2"/><circle cx="37.5" cy="38" r="1.1" fill="#f7a6e2"/><circle cx="42.5" cy="38" r="1.1" fill="#f7a6e2"/><circle cx="47.5" cy="38" r="1.1" fill="#f7a6e2"/><circle cx="52.5" cy="38" r="1.1" fill="#f7a6e2"/><circle cx="57.5" cy="38" r="1.1" fill="#f7a6e2"/><circle cx="0" cy="42" r="1.1" fill="#f7a6e2"/><circle cx="5" cy="42" r="1.1" fill="#f7a6e2"/><circle cx="10" cy="42" r="1.1" fill="#f7a6e2"/><circle cx="15" cy="42" r="1.1" fill="#f7a6e2"/><circle cx="20" cy="42" r="1.1" fill="#f7a6e2"/><circle cx="25" cy="42" r="1.1" fill="#f7a6e2"/><circle cx="30" cy="42" r="1.1" fill="#f7a6e2"/><circle cx="35" cy="42" r="1.1" fill="#f7a6e2"/><circle cx="40" cy="42" r="1.1" fill="#f7a6e2"/><circle cx="45" cy="42" r="1.1" fill="#f7a6e2"/><circle cx="50" cy="42" r="1.1" fill="#f7a6e2"/><circle cx="55" cy="42" r="1.1" fill="#f7a6e2"/><circle cx="2.5" cy="46" r="1.1" fill="#f7a6e2"/><circle cx="7.5" cy="46" r="1.1" fill="#f7a6e2"/><circle cx="12.5" cy="46" r="1.1" fill="#f7a6e2"/><circle cx="17.5" cy="46" r="1.1" fill="#f7a6e2"/><circle cx="22.5" cy="46" r="1.1" fill="#f7a6e2"/><circle cx="27.5" cy="46" r="1.1" fill="#f7a6e2"/><circle cx="32.5" cy="46" r="1.1" fill="#f7a6e2"/><circle cx="37.5" cy="46" r="1.1" fill="#f7a6e2"/><circle cx="42.5" cy="46" r="1.1" fill="#f7a6e2"/><circle cx="47.5" cy="46" r="1.1" fill="#f7a6e2"/><circle cx="52.5" cy="46" r="1.1" fill="#f7a6e2"/><circle cx="57.5" cy="46" r="1.1" fill="#f7a6e2"/><circle cx="0" cy="50" r="1.1" fill="#f7a6e2"/><circle cx="5" cy="50" r="1.1" fill="#f7a6e2"/><circle cx="10" cy="50" r="1.1" fill="#f7a6e2"/><circle cx="15" cy="50" r="1.1" fill="#f7a6e2"/><circle cx="20" cy="50" r="1.1" fill="#f7a6e2"/><circle cx="25" cy="50" r="1.1" fill="#f7a6e2"/><circle cx="30" cy="50" r="1.1" fill="#f7a6e2"/><circle cx="35" cy="50" r="1.1" fill="#f7a6e2"/><circle cx="40" cy="50" r="1.1" fill="#f7a6e2"/><circle cx="45" cy="50" r="1.1" fill="#f7a6e2"/><circle cx="50" cy="50" r="1.1" fill="#f7a6e2"/><circle cx="55" cy="50" r="1.1" fill="#f7a6e2"/><circle cx="2.5" cy="54" r="1.1" fill="#f7a6e2"/><circle cx="7.5" cy="54" r="1.1" fill="#f7a6e2"/><circle cx="12.5" cy="54" r="1.1" fill="#f7a6e2"/><circle cx="17.5" cy="54" r="1.1" fill="#f7a6e2"/><circle cx="22.5" cy="54" r="1.1" fill="#f7a6e2"/><circle cx="27.5" cy="54" r="1.1" fill="#f7a6e2"/><circle cx="32.5" cy="54" r="1.1" fill="#f7a6e2"/><circle cx="37.5" cy="54" r="1.1" fill="#f7a6e2"/><circle cx="42.5" cy="54" r="1.1" fill="#f7a6e2"/><circle cx="47.5" cy="54" r="1.1" fill="#f7a6e2"/><circle cx="52.5" cy="54" r="1.1" fill="#f7a6e2"/><circle cx="57.5" cy="54" r="1.1" fill="#f7a6e2"/></svg></div>
<div class="th" style="left:0.5px;top:442px"><svg width="56" height="56" viewBox="0 0 56 56"><rect width="56" height="56" fill="#12a2ea"/><circle cx="0" cy="1.4" r="1.3" fill="#a8e8f6"/><circle cx="-1.6" cy="4.2" r="1.3" fill="#a8e8f6"/><circle cx="1.6" cy="4.2" r="1.3" fill="#a8e8f6"/><circle cx="8" cy="1.4" r="1.3" fill="#a8e8f6"/><circle cx="6.4" cy="4.2" r="1.3" fill="#a8e8f6"/><circle cx="9.6" cy="4.2" r="1.3" fill="#a8e8f6"/><circle cx="16" cy="1.4" r="1.3" fill="#a8e8f6"/><circle cx="14.4" cy="4.2" r="1.3" fill="#a8e8f6"/><circle cx="17.6" cy="4.2" r="1.3" fill="#a8e8f6"/><circle cx="24" cy="1.4" r="1.3" fill="#a8e8f6"/><circle cx="22.4" cy="4.2" r="1.3" fill="#a8e8f6"/><circle cx="25.6" cy="4.2" r="1.3" fill="#a8e8f6"/><circle cx="32" cy="1.4" r="1.3" fill="#a8e8f6"/><circle cx="30.4" cy="4.2" r="1.3" fill="#a8e8f6"/><circle cx="33.6" cy="4.2" r="1.3" fill="#a8e8f6"/><circle cx="40" cy="1.4" r="1.3" fill="#a8e8f6"/><circle cx="38.4" cy="4.2" r="1.3" fill="#a8e8f6"/><circle cx="41.6" cy="4.2" r="1.3" fill="#a8e8f6"/><circle cx="48" cy="1.4" r="1.3" fill="#a8e8f6"/><circle cx="46.4" cy="4.2" r="1.3" fill="#a8e8f6"/><circle cx="49.6" cy="4.2" r="1.3" fill="#a8e8f6"/><circle cx="56" cy="1.4" r="1.3" fill="#a8e8f6"/><circle cx="54.4" cy="4.2" r="1.3" fill="#a8e8f6"/><circle cx="57.6" cy="4.2" r="1.3" fill="#a8e8f6"/><circle cx="4" cy="8.4" r="1.3" fill="#a8e8f6"/><circle cx="2.4" cy="11.2" r="1.3" fill="#a8e8f6"/><circle cx="5.6" cy="11.2" r="1.3" fill="#a8e8f6"/><circle cx="12" cy="8.4" r="1.3" fill="#a8e8f6"/><circle cx="10.4" cy="11.2" r="1.3" fill="#a8e8f6"/><circle cx="13.6" cy="11.2" r="1.3" fill="#a8e8f6"/><circle cx="20" cy="8.4" r="1.3" fill="#a8e8f6"/><circle cx="18.4" cy="11.2" r="1.3" fill="#a8e8f6"/><circle cx="21.6" cy="11.2" r="1.3" fill="#a8e8f6"/><circle cx="28" cy="8.4" r="1.3" fill="#a8e8f6"/><circle cx="26.4" cy="11.2" r="1.3" fill="#a8e8f6"/><circle cx="29.6" cy="11.2" r="1.3" fill="#a8e8f6"/><circle cx="36" cy="8.4" r="1.3" fill="#a8e8f6"/><circle cx="34.4" cy="11.2" r="1.3" fill="#a8e8f6"/><circle cx="37.6" cy="11.2" r="1.3" fill="#a8e8f6"/><circle cx="44" cy="8.4" r="1.3" fill="#a8e8f6"/><circle cx="42.4" cy="11.2" r="1.3" fill="#a8e8f6"/><circle cx="45.6" cy="11.2" r="1.3" fill="#a8e8f6"/><circle cx="52" cy="8.4" r="1.3" fill="#a8e8f6"/><circle cx="50.4" cy="11.2" r="1.3" fill="#a8e8f6"/><circle cx="53.6" cy="11.2" r="1.3" fill="#a8e8f6"/><circle cx="60" cy="8.4" r="1.3" fill="#a8e8f6"/><circle cx="58.4" cy="11.2" r="1.3" fill="#a8e8f6"/><circle cx="61.6" cy="11.2" r="1.3" fill="#a8e8f6"/><circle cx="0" cy="15.4" r="1.3" fill="#a8e8f6"/><circle cx="-1.6" cy="18.2" r="1.3" fill="#a8e8f6"/><circle cx="1.6" cy="18.2" r="1.3" fill="#a8e8f6"/><circle cx="8" cy="15.4" r="1.3" fill="#a8e8f6"/><circle cx="6.4" cy="18.2" r="1.3" fill="#a8e8f6"/><circle cx="9.6" cy="18.2" r="1.3" fill="#a8e8f6"/><circle cx="16" cy="15.4" r="1.3" fill="#a8e8f6"/><circle cx="14.4" cy="18.2" r="1.3" fill="#a8e8f6"/><circle cx="17.6" cy="18.2" r="1.3" fill="#a8e8f6"/><circle cx="24" cy="15.4" r="1.3" fill="#a8e8f6"/><circle cx="22.4" cy="18.2" r="1.3" fill="#a8e8f6"/><circle cx="25.6" cy="18.2" r="1.3" fill="#a8e8f6"/><circle cx="32" cy="15.4" r="1.3" fill="#a8e8f6"/><circle cx="30.4" cy="18.2" r="1.3" fill="#a8e8f6"/><circle cx="33.6" cy="18.2" r="1.3" fill="#a8e8f6"/><circle cx="40" cy="15.4" r="1.3" fill="#a8e8f6"/><circle cx="38.4" cy="18.2" r="1.3" fill="#a8e8f6"/><circle cx="41.6" cy="18.2" r="1.3" fill="#a8e8f6"/><circle cx="48" cy="15.4" r="1.3" fill="#a8e8f6"/><circle cx="46.4" cy="18.2" r="1.3" fill="#a8e8f6"/><circle cx="49.6" cy="18.2" r="1.3" fill="#a8e8f6"/><circle cx="56" cy="15.4" r="1.3" fill="#a8e8f6"/><circle cx="54.4" cy="18.2" r="1.3" fill="#a8e8f6"/><circle cx="57.6" cy="18.2" r="1.3" fill="#a8e8f6"/><circle cx="4" cy="22.4" r="1.3" fill="#a8e8f6"/><circle cx="2.4" cy="25.2" r="1.3" fill="#a8e8f6"/><circle cx="5.6" cy="25.2" r="1.3" fill="#a8e8f6"/><circle cx="12" cy="22.4" r="1.3" fill="#a8e8f6"/><circle cx="10.4" cy="25.2" r="1.3" fill="#a8e8f6"/><circle cx="13.6" cy="25.2" r="1.3" fill="#a8e8f6"/><circle cx="20" cy="22.4" r="1.3" fill="#a8e8f6"/><circle cx="18.4" cy="25.2" r="1.3" fill="#a8e8f6"/><circle cx="21.6" cy="25.2" r="1.3" fill="#a8e8f6"/><circle cx="28" cy="22.4" r="1.3" fill="#a8e8f6"/><circle cx="26.4" cy="25.2" r="1.3" fill="#a8e8f6"/><circle cx="29.6" cy="25.2" r="1.3" fill="#a8e8f6"/><circle cx="36" cy="22.4" r="1.3" fill="#a8e8f6"/><circle cx="34.4" cy="25.2" r="1.3" fill="#a8e8f6"/><circle cx="37.6" cy="25.2" r="1.3" fill="#a8e8f6"/><circle cx="44" cy="22.4" r="1.3" fill="#a8e8f6"/><circle cx="42.4" cy="25.2" r="1.3" fill="#a8e8f6"/><circle cx="45.6" cy="25.2" r="1.3" fill="#a8e8f6"/><circle cx="52" cy="22.4" r="1.3" fill="#a8e8f6"/><circle cx="50.4" cy="25.2" r="1.3" fill="#a8e8f6"/><circle cx="53.6" cy="25.2" r="1.3" fill="#a8e8f6"/><circle cx="60" cy="22.4" r="1.3" fill="#a8e8f6"/><circle cx="58.4" cy="25.2" r="1.3" fill="#a8e8f6"/><circle cx="61.6" cy="25.2" r="1.3" fill="#a8e8f6"/><circle cx="0" cy="29.4" r="1.3" fill="#a8e8f6"/><circle cx="-1.6" cy="32.2" r="1.3" fill="#a8e8f6"/><circle cx="1.6" cy="32.2" r="1.3" fill="#a8e8f6"/><circle cx="8" cy="29.4" r="1.3" fill="#a8e8f6"/><circle cx="6.4" cy="32.2" r="1.3" fill="#a8e8f6"/><circle cx="9.6" cy="32.2" r="1.3" fill="#a8e8f6"/><circle cx="16" cy="29.4" r="1.3" fill="#a8e8f6"/><circle cx="14.4" cy="32.2" r="1.3" fill="#a8e8f6"/><circle cx="17.6" cy="32.2" r="1.3" fill="#a8e8f6"/><circle cx="24" cy="29.4" r="1.3" fill="#a8e8f6"/><circle cx="22.4" cy="32.2" r="1.3" fill="#a8e8f6"/><circle cx="25.6" cy="32.2" r="1.3" fill="#a8e8f6"/><circle cx="32" cy="29.4" r="1.3" fill="#a8e8f6"/><circle cx="30.4" cy="32.2" r="1.3" fill="#a8e8f6"/><circle cx="33.6" cy="32.2" r="1.3" fill="#a8e8f6"/><circle cx="40" cy="29.4" r="1.3" fill="#a8e8f6"/><circle cx="38.4" cy="32.2" r="1.3" fill="#a8e8f6"/><circle cx="41.6" cy="32.2" r="1.3" fill="#a8e8f6"/><circle cx="48" cy="29.4" r="1.3" fill="#a8e8f6"/><circle cx="46.4" cy="32.2" r="1.3" fill="#a8e8f6"/><circle cx="49.6" cy="32.2" r="1.3" fill="#a8e8f6"/><circle cx="56" cy="29.4" r="1.3" fill="#a8e8f6"/><circle cx="54.4" cy="32.2" r="1.3" fill="#a8e8f6"/><circle cx="57.6" cy="32.2" r="1.3" fill="#a8e8f6"/><circle cx="4" cy="36.4" r="1.3" fill="#a8e8f6"/><circle cx="2.4" cy="39.2" r="1.3" fill="#a8e8f6"/><circle cx="5.6" cy="39.2" r="1.3" fill="#a8e8f6"/><circle cx="12" cy="36.4" r="1.3" fill="#a8e8f6"/><circle cx="10.4" cy="39.2" r="1.3" fill="#a8e8f6"/><circle cx="13.6" cy="39.2" r="1.3" fill="#a8e8f6"/><circle cx="20" cy="36.4" r="1.3" fill="#a8e8f6"/><circle cx="18.4" cy="39.2" r="1.3" fill="#a8e8f6"/><circle cx="21.6" cy="39.2" r="1.3" fill="#a8e8f6"/><circle cx="28" cy="36.4" r="1.3" fill="#a8e8f6"/><circle cx="26.4" cy="39.2" r="1.3" fill="#a8e8f6"/><circle cx="29.6" cy="39.2" r="1.3" fill="#a8e8f6"/><circle cx="36" cy="36.4" r="1.3" fill="#a8e8f6"/><circle cx="34.4" cy="39.2" r="1.3" fill="#a8e8f6"/><circle cx="37.6" cy="39.2" r="1.3" fill="#a8e8f6"/><circle cx="44" cy="36.4" r="1.3" fill="#a8e8f6"/><circle cx="42.4" cy="39.2" r="1.3" fill="#a8e8f6"/><circle cx="45.6" cy="39.2" r="1.3" fill="#a8e8f6"/><circle cx="52" cy="36.4" r="1.3" fill="#a8e8f6"/><circle cx="50.4" cy="39.2" r="1.3" fill="#a8e8f6"/><circle cx="53.6" cy="39.2" r="1.3" fill="#a8e8f6"/><circle cx="60" cy="36.4" r="1.3" fill="#a8e8f6"/><circle cx="58.4" cy="39.2" r="1.3" fill="#a8e8f6"/><circle cx="61.6" cy="39.2" r="1.3" fill="#a8e8f6"/><circle cx="0" cy="43.4" r="1.3" fill="#a8e8f6"/><circle cx="-1.6" cy="46.2" r="1.3" fill="#a8e8f6"/><circle cx="1.6" cy="46.2" r="1.3" fill="#a8e8f6"/><circle cx="8" cy="43.4" r="1.3" fill="#a8e8f6"/><circle cx="6.4" cy="46.2" r="1.3" fill="#a8e8f6"/><circle cx="9.6" cy="46.2" r="1.3" fill="#a8e8f6"/><circle cx="16" cy="43.4" r="1.3" fill="#a8e8f6"/><circle cx="14.4" cy="46.2" r="1.3" fill="#a8e8f6"/><circle cx="17.6" cy="46.2" r="1.3" fill="#a8e8f6"/><circle cx="24" cy="43.4" r="1.3" fill="#a8e8f6"/><circle cx="22.4" cy="46.2" r="1.3" fill="#a8e8f6"/><circle cx="25.6" cy="46.2" r="1.3" fill="#a8e8f6"/><circle cx="32" cy="43.4" r="1.3" fill="#a8e8f6"/><circle cx="30.4" cy="46.2" r="1.3" fill="#a8e8f6"/><circle cx="33.6" cy="46.2" r="1.3" fill="#a8e8f6"/><circle cx="40" cy="43.4" r="1.3" fill="#a8e8f6"/><circle cx="38.4" cy="46.2" r="1.3" fill="#a8e8f6"/><circle cx="41.6" cy="46.2" r="1.3" fill="#a8e8f6"/><circle cx="48" cy="43.4" r="1.3" fill="#a8e8f6"/><circle cx="46.4" cy="46.2" r="1.3" fill="#a8e8f6"/><circle cx="49.6" cy="46.2" r="1.3" fill="#a8e8f6"/><circle cx="56" cy="43.4" r="1.3" fill="#a8e8f6"/><circle cx="54.4" cy="46.2" r="1.3" fill="#a8e8f6"/><circle cx="57.6" cy="46.2" r="1.3" fill="#a8e8f6"/><circle cx="4" cy="50.4" r="1.3" fill="#a8e8f6"/><circle cx="2.4" cy="53.2" r="1.3" fill="#a8e8f6"/><circle cx="5.6" cy="53.2" r="1.3" fill="#a8e8f6"/><circle cx="12" cy="50.4" r="1.3" fill="#a8e8f6"/><circle cx="10.4" cy="53.2" r="1.3" fill="#a8e8f6"/><circle cx="13.6" cy="53.2" r="1.3" fill="#a8e8f6"/><circle cx="20" cy="50.4" r="1.3" fill="#a8e8f6"/><circle cx="18.4" cy="53.2" r="1.3" fill="#a8e8f6"/><circle cx="21.6" cy="53.2" r="1.3" fill="#a8e8f6"/><circle cx="28" cy="50.4" r="1.3" fill="#a8e8f6"/><circle cx="26.4" cy="53.2" r="1.3" fill="#a8e8f6"/><circle cx="29.6" cy="53.2" r="1.3" fill="#a8e8f6"/><circle cx="36" cy="50.4" r="1.3" fill="#a8e8f6"/><circle cx="34.4" cy="53.2" r="1.3" fill="#a8e8f6"/><circle cx="37.6" cy="53.2" r="1.3" fill="#a8e8f6"/><circle cx="44" cy="50.4" r="1.3" fill="#a8e8f6"/><circle cx="42.4" cy="53.2" r="1.3" fill="#a8e8f6"/><circle cx="45.6" cy="53.2" r="1.3" fill="#a8e8f6"/><circle cx="52" cy="50.4" r="1.3" fill="#a8e8f6"/><circle cx="50.4" cy="53.2" r="1.3" fill="#a8e8f6"/><circle cx="53.6" cy="53.2" r="1.3" fill="#a8e8f6"/><circle cx="60" cy="50.4" r="1.3" fill="#a8e8f6"/><circle cx="58.4" cy="53.2" r="1.3" fill="#a8e8f6"/><circle cx="61.6" cy="53.2" r="1.3" fill="#a8e8f6"/><circle cx="0" cy="57.4" r="1.3" fill="#a8e8f6"/><circle cx="-1.6" cy="60.2" r="1.3" fill="#a8e8f6"/><circle cx="1.6" cy="60.2" r="1.3" fill="#a8e8f6"/><circle cx="8" cy="57.4" r="1.3" fill="#a8e8f6"/><circle cx="6.4" cy="60.2" r="1.3" fill="#a8e8f6"/><circle cx="9.6" cy="60.2" r="1.3" fill="#a8e8f6"/><circle cx="16" cy="57.4" r="1.3" fill="#a8e8f6"/><circle cx="14.4" cy="60.2" r="1.3" fill="#a8e8f6"/><circle cx="17.6" cy="60.2" r="1.3" fill="#a8e8f6"/><circle cx="24" cy="57.4" r="1.3" fill="#a8e8f6"/><circle cx="22.4" cy="60.2" r="1.3" fill="#a8e8f6"/><circle cx="25.6" cy="60.2" r="1.3" fill="#a8e8f6"/><circle cx="32" cy="57.4" r="1.3" fill="#a8e8f6"/><circle cx="30.4" cy="60.2" r="1.3" fill="#a8e8f6"/><circle cx="33.6" cy="60.2" r="1.3" fill="#a8e8f6"/><circle cx="40" cy="57.4" r="1.3" fill="#a8e8f6"/><circle cx="38.4" cy="60.2" r="1.3" fill="#a8e8f6"/><circle cx="41.6" cy="60.2" r="1.3" fill="#a8e8f6"/><circle cx="48" cy="57.4" r="1.3" fill="#a8e8f6"/><circle cx="46.4" cy="60.2" r="1.3" fill="#a8e8f6"/><circle cx="49.6" cy="60.2" r="1.3" fill="#a8e8f6"/><circle cx="56" cy="57.4" r="1.3" fill="#a8e8f6"/><circle cx="54.4" cy="60.2" r="1.3" fill="#a8e8f6"/><circle cx="57.6" cy="60.2" r="1.3" fill="#a8e8f6"/></svg></div>
<div class="th" style="left:65.5px;top:442px"><svg width="56" height="56" viewBox="0 0 56 56"><rect width="56" height="56" fill="#d9de3c"/><circle cx="4.4" cy="40.2" r="1.2" fill="#cfd250"/><circle cx="14.3" cy="13.3" r="1.2" fill="#e2e650"/><circle cx="16.2" cy="39.1" r="1.0" fill="#cfd250"/><circle cx="13.8" cy="50.2" r="1.0" fill="#e2e650"/><circle cx="19.6" cy="36.0" r="1.1" fill="#cfd250"/><circle cx="31.1" cy="37.8" r="0.9" fill="#cfd250"/><circle cx="5.4" cy="18.2" r="0.8" fill="#cfd250"/><circle cx="49.2" cy="20.9" r="1.1" fill="#e2e650"/><circle cx="51.8" cy="3.7" r="1.2" fill="#cfd250"/><circle cx="32.7" cy="36.2" r="1.0" fill="#cfd250"/><circle cx="42.8" cy="27.2" r="1.2" fill="#e2e650"/><circle cx="25.2" cy="11.1" r="1.3" fill="#e2e650"/><circle cx="4.1" cy="47.1" r="0.9" fill="#e2e650"/><circle cx="5.1" cy="7.7" r="1.0" fill="#cfd250"/><circle cx="23.5" cy="56.4" r="0.9" fill="#e2e650"/><circle cx="25.3" cy="27.1" r="1.1" fill="#cfd250"/><circle cx="13.4" cy="21.6" r="1.1" fill="#e2e650"/><circle cx="2.0" cy="6.6" r="1.2" fill="#e2e650"/><circle cx="-0.9" cy="40.3" r="1.4" fill="#e2e650"/><circle cx="-0.8" cy="40.6" r="1.0" fill="#e2e650"/><circle cx="13.8" cy="16.1" r="0.9" fill="#e2e650"/><circle cx="45.9" cy="3.7" r="0.9" fill="#cfd250"/><circle cx="16.7" cy="57.0" r="1.2" fill="#e2e650"/><circle cx="29.3" cy="46.3" r="1.4" fill="#cfd250"/><circle cx="0.1" cy="6.8" r="0.9" fill="#cfd250"/><circle cx="13.0" cy="28.0" r="0.9" fill="#cfd250"/><circle cx="34.2" cy="53.0" r="1.0" fill="#e2e650"/><circle cx="-0.1" cy="53.3" r="1.2" fill="#cfd250"/><circle cx="28.5" cy="48.5" r="1.0" fill="#e2e650"/><circle cx="12.7" cy="21.3" r="1.1" fill="#e2e650"/></svg></div>
<div class="abs" style="left:128px;top:31px;width:4px;height:45px;border-radius:2px;background:#6c6b6e"></div>
<div id="search"><div>Search</div><svg class="abs" style="left:8px;top:8px" width="10" height="10" viewBox="0 0 10 10"><circle cx="4" cy="4" r="3" fill="none" stroke="#e8e8e8" stroke-width="1.2"/><path d="M6.2 6.200l3 3" stroke="#e8e8e8" stroke-width="1.3" stroke-linecap="round"/></svg></div>
</div>
<div id="strip">
  <svg class="abs" style="left:5px;top:5px" width="9" height="9" viewBox="0 0 9 9"><path d="M4.5 .5v8M.5 4.500h8" stroke="#8a898c" stroke-width="1"/></svg>
  <svg class="abs" style="left:5px;top:18px" width="9" height="9" viewBox="0 0 9 9"><path d="M.5 4.500h8" stroke="#6a696c" stroke-width="1"/></svg>
  <svg class="abs" style="left:4px;top:52px" width="11" height="11" viewBox="0 0 11 11"><g stroke="#c9c8cb" fill="none"><circle cx="5.5" cy="5.5" r="2.6" stroke-width="1.3"/><path d="M5.5 .6v1.800M5.5 8.600v1.800M.6 5.500h1.800M8.6 5.500h1.800M2 2l1.3 1.300M7.7 7.700L9 9M9 2L7.7 3.300M3.3 7.700L2 9" stroke-width="1.2"/></g></svg>
  <div class="vsep" style="left:19px;top:0;height:62px;background:#3b3a3d"></div>
  <div class="abs" style="left:33px;top:3px;width:34px;height:48px;background:#fff;border:1.500px solid #1d74e6"></div>
  <svg class="abs" style="left:41px;top:8px" width="16" height="16" viewBox="0 0 231 231"><use href="#mall"/></svg>
  <div class="abs" style="left:40px;top:51px;width:20px;text-align:center;font-size:7.500px;line-height:9px;color:#d8d8d8">1</div>
</div>
<div id="splitter"></div>

<div id="rulertop"><i></i></div><div id="rcorner">mm</div>
<div id="rulerh"><i class="abs" style="left:11.5px;top:0;width:1px;height:4px;background:#656467"></i><i class="abs" style="left:34.3px;top:0;width:1px;height:4px;background:#656467"></i><i class="abs" style="left:57.1px;top:0;width:1px;height:9px;background:#656467"></i><span class="rl" style="left:59.4px;top:3.5px">0</span><i class="abs" style="left:79.9px;top:0;width:1px;height:4px;background:#656467"></i><i class="abs" style="left:102.7px;top:0;width:1px;height:4px;background:#656467"></i><i class="abs" style="left:125.5px;top:0;width:1px;height:4px;background:#656467"></i><i class="abs" style="left:148.2px;top:0;width:1px;height:4px;background:#656467"></i><i class="abs" style="left:171.0px;top:0;width:1px;height:9px;background:#656467"></i><span class="rl" style="left:173.3px;top:3.5px">50</span><i class="abs" style="left:193.8px;top:0;width:1px;height:4px;background:#656467"></i><i class="abs" style="left:216.6px;top:0;width:1px;height:4px;background:#656467"></i><i class="abs" style="left:239.4px;top:0;width:1px;height:4px;background:#656467"></i><i class="abs" style="left:262.2px;top:0;width:1px;height:4px;background:#656467"></i><i class="abs" style="left:285.0px;top:0;width:1px;height:9px;background:#656467"></i><span class="rl" style="left:287.3px;top:3.5px">100</span><i class="abs" style="left:307.7px;top:0;width:1px;height:4px;background:#656467"></i><i class="abs" style="left:330.5px;top:0;width:1px;height:4px;background:#656467"></i><i class="abs" style="left:353.3px;top:0;width:1px;height:4px;background:#656467"></i><i class="abs" style="left:376.1px;top:0;width:1px;height:4px;background:#656467"></i><i class="abs" style="left:398.9px;top:0;width:1px;height:9px;background:#656467"></i><span class="rl" style="left:401.2px;top:3.5px">150</span><i class="abs" style="left:421.7px;top:0;width:1px;height:4px;background:#656467"></i><i class="abs" style="left:444.4px;top:0;width:1px;height:4px;background:#656467"></i><i class="abs" style="left:467.2px;top:0;width:1px;height:4px;background:#656467"></i><i class="abs" style="left:490.0px;top:0;width:1px;height:4px;background:#656467"></i><i class="abs" style="left:512.8px;top:0;width:1px;height:9px;background:#656467"></i><span class="rl" style="left:515.1px;top:3.5px">200</span><i class="abs" style="left:535.6px;top:0;width:1px;height:4px;background:#656467"></i><i class="abs" style="left:558.4px;top:0;width:1px;height:4px;background:#656467"></i><i class="abs" style="left:581.2px;top:0;width:1px;height:4px;background:#656467"></i></div>
<div id="rulerv"><i class="abs" style="left:1px;top:11.6px;width:4px;height:1px;background:#656467"></i><i class="abs" style="left:1px;top:34.4px;width:4px;height:1px;background:#656467"></i><i class="abs" style="left:1px;top:57.2px;width:4px;height:1px;background:#656467"></i><i class="abs" style="left:1px;top:79.9px;width:4px;height:1px;background:#656467"></i><i class="abs" style="left:1px;top:102.7px;width:5px;height:1px;background:#656467"></i><span class="rl" style="left:4.1px;top:105.1px;width:10.8px;height:8px;text-align:center;font-size:8px;transform:rotate(-90deg);transform-origin:50% 50%">50</span><i class="abs" style="left:1px;top:125.5px;width:4px;height:1px;background:#656467"></i><i class="abs" style="left:1px;top:148.3px;width:4px;height:1px;background:#656467"></i><i class="abs" style="left:1px;top:171.1px;width:4px;height:1px;background:#656467"></i><i class="abs" style="left:1px;top:193.9px;width:4px;height:1px;background:#656467"></i><i class="abs" style="left:1px;top:216.7px;width:5px;height:1px;background:#656467"></i><span class="rl" style="left:1.6px;top:221.5px;width:15.7px;height:8px;text-align:center;font-size:8px;transform:rotate(-90deg);transform-origin:50% 50%">100</span><i class="abs" style="left:1px;top:239.4px;width:4px;height:1px;background:#656467"></i><i class="abs" style="left:1px;top:262.2px;width:4px;height:1px;background:#656467"></i><i class="abs" style="left:1px;top:285.0px;width:4px;height:1px;background:#656467"></i><i class="abs" style="left:1px;top:307.8px;width:4px;height:1px;background:#656467"></i><i class="abs" style="left:1px;top:330.6px;width:5px;height:1px;background:#656467"></i><span class="rl" style="left:1.6px;top:335.4px;width:15.7px;height:8px;text-align:center;font-size:8px;transform:rotate(-90deg);transform-origin:50% 50%">150</span><i class="abs" style="left:1px;top:353.4px;width:4px;height:1px;background:#656467"></i><i class="abs" style="left:1px;top:376.1px;width:4px;height:1px;background:#656467"></i></div><div id="canvas">
  <div id="page">
    <div id="guides"></div>
    
  </div>
</div>
<div id="vscroll"><i></i></div>
<div id="hscroll"><i></i></div>

<div id="insp">
  <div class="h" style="top:10px">Page Size</div>
  <svg class="abs" style="left:9px;top:28px" width="12" height="9" viewBox="0 0 12 9"><path d="M.5 .5v8M11.5 .5v8M.5 4.500h11" stroke="#9a999c" stroke-width="1" fill="none"/></svg>
  <div class="fld" style="left:24px;top:27px;width:45px;height:12px;font-size:8.8px;line-height:12px;padding-left:3px">210.0 mm</div>
  <div class="stp" style="left:72px;top:26.500px"><svg width="8" height="12" viewBox="0 0 8 12"><path d="M2 4.800L4 2.800l2 2M2 7.200l2 2 2-2" fill="none" stroke="#e6e6e6" stroke-width="1.1"/></svg></div>
  <svg class="abs" style="left:85px;top:27px" width="9" height="12" viewBox="0 0 9 12"><path d="M.5 .5h8M.5 11.500h8M4.5 .5v11" stroke="#9a999c" stroke-width="1" fill="none"/></svg>
  <div class="fld" style="left:98px;top:27px;width:46px;height:12px;font-size:8.8px;line-height:12px;padding-left:3px">297.0 mm</div>
  <div class="stp" style="left:146px;top:26.500px"><svg width="8" height="12" viewBox="0 0 8 12"><path d="M2 4.800L4 2.800l2 2M2 7.200l2 2 2-2" fill="none" stroke="#e6e6e6" stroke-width="1.1"/></svg></div>
  <div class="sel" style="top:48px">A4<i><svg width="10" height="11" viewBox="0 0 10 11"><path d="M2.8 4.500L5 6.700l2.2-2.2" fill="none" stroke="#fff" stroke-width="1.2"/></svg></i></div>
  <div class="sel" style="top:69px">Millimeters (mm)<i><svg width="10" height="11" viewBox="0 0 10 11"><path d="M3 4.400L5 2.400l2 2M3 6.600l2 2 2-2" fill="none" stroke="#fff" stroke-width="1.1"/></svg></i></div>
  <div class="h" style="top:89px">Orientation</div>
  <svg class="abs" style="left:40px;top:115px" width="38" height="28" viewBox="0 0 38 28"><path d="M0 0h29l9 9v19H0z" fill="#fff"/><path d="M29 0l9 9h-9z" fill="#d2d2d2"/></svg>
  <svg class="abs" style="left:94px;top:105px" width="28" height="38" viewBox="0 0 28 38"><path d="M0 0h19l9 9v29H0z" fill="#fff"/><path d="M19 0l9 9h-9z" fill="#d2d2d2"/><path d="M5.5 30l2.5 3 4.5-6" fill="none" stroke="#1f7bea" stroke-width="1.3"/></svg>
  <div class="abs" style="left:8px;top:160px;width:8px;height:8px;border-radius:1.500px;background:#5a595c"></div>
  <div class="h" style="left:19.500px;top:159px">Simulate paper color</div>
  <div class="abs" style="left:62px;top:175px;width:40px;height:18px;background:#444346;border:1px solid #535255"></div>
  <div class="abs" style="left:66px;top:179px;width:32px;height:10.500px;background:#a9a8ab"></div>
  <div class="h" style="top:212px">Document Margins</div>
  <div class="fld" style="left:57px;top:233px;width:41px">8.8 mm</div><div class="stp" style="left:100px;top:232.500px"><svg width="8" height="12" viewBox="0 0 8 12"><path d="M2 4.800L4 2.800l2 2M2 7.200l2 2 2-2" fill="none" stroke="#e6e6e6" stroke-width="1.1"/></svg></div>
  <div class="lab" style="left:77px;top:247px">Top</div>
  <div class="fld" style="left:10px;top:253px;width:41px">5.3 mm</div><div class="stp" style="left:54px;top:252.500px"><svg width="8" height="12" viewBox="0 0 8 12"><path d="M2 4.800L4 2.800l2 2M2 7.200l2 2 2-2" fill="none" stroke="#e6e6e6" stroke-width="1.1"/></svg></div>
  <div class="lab" style="left:31px;top:267px">Left</div>
  <div class="fld" style="left:103px;top:253px;width:41px">5.3 mm</div><div class="stp" style="left:146px;top:252.500px"><svg width="8" height="12" viewBox="0 0 8 12"><path d="M2 4.800L4 2.800l2 2M2 7.200l2 2 2-2" fill="none" stroke="#e6e6e6" stroke-width="1.1"/></svg></div>
  <div class="lab" style="left:123px;top:267px">Right</div>
  <div class="fld" style="left:57px;top:273px;width:41px">8.8 mm</div><div class="stp" style="left:100px;top:272.500px"><svg width="8" height="12" viewBox="0 0 8 12"><path d="M2 4.800L4 2.800l2 2M2 7.200l2 2 2-2" fill="none" stroke="#e6e6e6" stroke-width="1.1"/></svg></div>
  <div class="lab" style="left:77px;top:287px">Bottom</div>
  <div class="h" style="top:309px">Info</div>
  <div class="lab" style="left:9px;top:325px;margin:0;width:auto;text-align:left">Title</div>
  <div class="fld" style="left:9px;top:342px;width:145px;height:12px"></div>
  <div class="abs" style="left:157px;top:2px;width:4px;height:284px;border-radius:2px;background:#6c6b6e"></div>
  <!-- layers -->
  <div class="abs" style="left:0;top:363px;width:160px;height:125px;background:#2f2e31;border-top:1.500px solid #19181b"></div>
  <svg class="abs" style="left:56px;top:367px" width="14" height="13" viewBox="0 0 14 13"><g fill="#1a5fc4" stroke="#2a86f3" stroke-width="1"><path d="M7 6.500L1 9.2 7 12l6-2.800z"/><path d="M7 4L1 6.7 7 9.500l6-2.800z"/><path d="M7 1L1 3.9 7 6.700l6-2.800z"/></g></svg>
  <svg class="abs" style="left:90px;top:368px" width="13" height="12" viewBox="0 0 13 12"><path d="M.5 3h12M.5 6h12M.5 9h12M3 .5v11M6.5 .5v11M10 .5v11" stroke="#8a898c" stroke-width="1" fill="none"/></svg>
  <div class="abs" style="left:0;top:386px;width:160px;height:18px;background:#464548;color:#b0afb2;font-size:8.800px;line-height:18px;padding-left:2px">Foreground</div>
  <div class="abs" style="left:0;top:404px;width:160px;height:18px;color:#f0f0f0;font-size:8.800px;line-height:18px;padding-left:2px">Background</div>
  <svg class="abs" style="left:114px;top:390px" width="10" height="10" viewBox="0 0 10 10"><path d="M1 9l.6-2.400L7 1.2 8.8 3 3.4 8.400z" fill="none" stroke="#ececec" stroke-width="1"/></svg>
  <svg class="abs" style="left:131px;top:391px" width="11" height="8" viewBox="0 0 11 8"><path d="M.6 4C2 1.5 3.8 .7 5.5 .7S9 1.5 10.4 4C9 6.5 7.2 7.3 5.5 7.300S2 6.5 .6 4z" fill="none" stroke="#ececec" stroke-width="1"/><circle cx="5.5" cy="4" r="1.5" fill="none" stroke="#ececec" stroke-width="1"/></svg>
  <svg class="abs" style="left:148px;top:390px" width="11" height="10" viewBox="0 0 11 10"><path d="M2.5 3V.6h6V3M2.5 7.500H.8V4q0-1 1-1h7.400q1 0 1 1v3.500H8.500M2.5 5.500h6v4h-6z" fill="none" stroke="#ececec" stroke-width="1"/></svg>
  <svg class="abs" style="left:131px;top:409px" width="11" height="8" viewBox="0 0 11 8"><path d="M.6 4C2 1.5 3.8 .7 5.5 .7S9 1.5 10.4 4C9 6.5 7.2 7.3 5.5 7.300S2 6.5 .6 4z" fill="none" stroke="#5a595c" stroke-width="1"/><circle cx="5.5" cy="4" r="1.5" fill="none" stroke="#5a595c" stroke-width="1"/></svg>
  <svg class="abs" style="left:148px;top:408px" width="11" height="10" viewBox="0 0 11 10"><path d="M2.5 3V.6h6V3M2.5 7.500H.8V4q0-1 1-1h7.400q1 0 1 1v3.500H8.500M2.5 5.500h6v4h-6z" fill="none" stroke="#5a595c" stroke-width="1"/></svg>
  <svg class="abs" style="left:5px;top:478px" width="9" height="9" viewBox="0 0 9 9"><path d="M4.5 .5v8M.5 4.500h8" stroke="#6a696c" stroke-width="1"/></svg>
  <svg class="abs" style="left:24px;top:478px" width="9" height="9" viewBox="0 0 9 9"><path d="M.5 4.500h8" stroke="#5a595c" stroke-width="1"/></svg>
</div>

<svg class="abs" style="left:319px;top:213px" width="231" height="231" viewBox="0 0 231 231"><defs><filter id="mb" x="-10%" y="-10%" width="120%" height="120%"><feGaussianBlur stdDeviation="4.0"/></filter><clipPath id="mc"><rect width="231" height="231"/></clipPath><linearGradient id="mrx" x1="0" x2="1" y1="0" y2="0"><stop offset="0" stop-color="#000"/><stop offset="1" stop-color="#f00"/></linearGradient><linearGradient id="mry" x1="0" x2="0" y1="0" y2="1"><stop offset="0" stop-color="#000"/><stop offset="1" stop-color="#0f0"/></linearGradient><pattern id="mpx" width="7.966" height="7.966" patternUnits="userSpaceOnUse"><rect width="7.966" height="7.966" fill="url(#mrx)"/></pattern><pattern id="mpy" width="7.966" height="7.966" patternUnits="userSpaceOnUse"><rect width="7.966" height="7.966" fill="url(#mry)"/></pattern><filter id="mgl" filterUnits="userSpaceOnUse" x="-20" y="-20" width="271" height="900" color-interpolation-filters="sRGB"><feOffset in="SourceGraphic" dy="-300" result="mx"/><feOffset in="SourceGraphic" dy="-600" result="my"/><feBlend in="mx" in2="my" mode="screen" result="map"/><feDisplacementMap in="SourceGraphic" in2="map" scale="-28" xChannelSelector="R" yChannelSelector="G"/></filter><pattern id="mp" width="7.966" height="7.966" patternUnits="userSpaceOnUse"><path d="M0 0H7.966M0 0V7.966" stroke="#013" stroke-opacity=".16" stroke-width=".7"/><path d="M1 7.966L4.48 0M3.98 7.966L7.47 0" stroke="#021" stroke-opacity=".13" stroke-width=".6"/></pattern></defs><g id="mall" clip-path="url(#mc)"><g filter="url(#mgl)"><g filter="url(#mb)"><rect x="-16.8" y="-16.8" width="17.1" height="17.1" fill="#678efc"/><rect x="-0.3" y="-16.8" width="17.1" height="17.1" fill="#678efc"/><rect x="16.2" y="-16.8" width="17.1" height="17.1" fill="#678efc"/><rect x="32.7" y="-16.8" width="17.1" height="17.1" fill="#678efc"/><rect x="49.2" y="-16.8" width="17.1" height="17.1" fill="#9682fa"/><rect x="65.7" y="-16.8" width="17.1" height="17.1" fill="#fa98fa"/><rect x="82.2" y="-16.8" width="17.1" height="17.1" fill="#fa98fa"/><rect x="98.7" y="-16.8" width="17.1" height="17.1" fill="#678efc"/><rect x="115.2" y="-16.8" width="17.1" height="17.1" fill="#20a0fe"/><rect x="131.7" y="-16.8" width="17.1" height="17.1" fill="#1ba2d4"/><rect x="148.2" y="-16.8" width="17.1" height="17.1" fill="#19a569"/><rect x="164.7" y="-16.8" width="17.1" height="17.1" fill="#68ca1e"/><rect x="181.2" y="-16.8" width="17.1" height="17.1" fill="#98e418"/><rect x="197.7" y="-16.8" width="17.1" height="17.1" fill="#20a426"/><rect x="214.2" y="-16.8" width="17.1" height="17.1" fill="#19a4c0"/><rect x="230.7" y="-16.8" width="17.1" height="17.1" fill="#19a4c0"/><rect x="-16.8" y="-0.3" width="17.1" height="17.1" fill="#678efc"/><rect x="-0.3" y="-0.3" width="17.1" height="17.1" fill="#678efc"/><rect x="16.2" y="-0.3" width="17.1" height="17.1" fill="#678efc"/><rect x="32.7" y="-0.3" width="17.1" height="17.1" fill="#678efc"/><rect x="49.2" y="-0.3" width="17.1" height="17.1" fill="#9682fa"/><rect x="65.7" y="-0.3" width="17.1" height="17.1" fill="#fa98fa"/><rect x="82.2" y="-0.3" width="17.1" height="17.1" fill="#fa98fa"/><rect x="98.7" y="-0.3" width="17.1" height="17.1" fill="#678efc"/><rect x="115.2" y="-0.3" width="17.1" height="17.1" fill="#20a0fe"/><rect x="131.7" y="-0.3" width="17.1" height="17.1" fill="#1ba2d4"/><rect x="148.2" y="-0.3" width="17.1" height="17.1" fill="#19a569"/><rect x="164.7" y="-0.3" width="17.1" height="17.1" fill="#68ca1e"/><rect x="181.2" y="-0.3" width="17.1" height="17.1" fill="#98e418"/><rect x="197.7" y="-0.3" width="17.1" height="17.1" fill="#20a426"/><rect x="214.2" y="-0.3" width="17.1" height="17.1" fill="#19a4c0"/><rect x="230.7" y="-0.3" width="17.1" height="17.1" fill="#19a4c0"/><rect x="-16.8" y="16.2" width="17.1" height="17.1" fill="#20a0fe"/><rect x="-0.3" y="16.2" width="17.1" height="17.1" fill="#20a0fe"/><rect x="16.2" y="16.2" width="17.1" height="17.1" fill="#20a0fe"/><rect x="32.7" y="16.2" width="17.1" height="17.1" fill="#4f94fc"/><rect x="49.2" y="16.2" width="17.1" height="17.1" fill="#9682fa"/><rect x="65.7" y="16.2" width="17.1" height="17.1" fill="#fa98fa"/><rect x="82.2" y="16.2" width="17.1" height="17.1" fill="#fa98fa"/><rect x="98.7" y="16.2" width="17.1" height="17.1" fill="#678efc"/><rect x="115.2" y="16.2" width="17.1" height="17.1" fill="#20a0fe"/><rect x="131.7" y="16.2" width="17.1" height="17.1" fill="#20a0fe"/><rect x="148.2" y="16.2" width="17.1" height="17.1" fill="#19a569"/><rect x="164.7" y="16.2" width="17.1" height="17.1" fill="#98e418"/><rect x="181.2" y="16.2" width="17.1" height="17.1" fill="#98e418"/><rect x="197.7" y="16.2" width="17.1" height="17.1" fill="#20a426"/><rect x="214.2" y="16.2" width="17.1" height="17.1" fill="#19a4c0"/><rect x="230.7" y="16.2" width="17.1" height="17.1" fill="#19a4c0"/><rect x="-16.8" y="32.7" width="17.1" height="17.1" fill="#20a0fe"/><rect x="-0.3" y="32.7" width="17.1" height="17.1" fill="#20a0fe"/><rect x="16.2" y="32.7" width="17.1" height="17.1" fill="#20a0fe"/><rect x="32.7" y="32.7" width="17.1" height="17.1" fill="#20a0fe"/><rect x="49.2" y="32.7" width="17.1" height="17.1" fill="#4f94fc"/><rect x="65.7" y="32.7" width="17.1" height="17.1" fill="#fa98fa"/><rect x="82.2" y="32.7" width="17.1" height="17.1" fill="#d28ffa"/><rect x="98.7" y="32.7" width="17.1" height="17.1" fill="#4f94fc"/><rect x="115.2" y="32.7" width="17.1" height="17.1" fill="#20a0fe"/><rect x="131.7" y="32.7" width="17.1" height="17.1" fill="#20a0fe"/><rect x="148.2" y="32.7" width="17.1" height="17.1" fill="#19a569"/><rect x="164.7" y="32.7" width="17.1" height="17.1" fill="#98e418"/><rect x="181.2" y="32.7" width="17.1" height="17.1" fill="#98e418"/><rect x="197.7" y="32.7" width="17.1" height="17.1" fill="#1ba553"/><rect x="214.2" y="32.7" width="17.1" height="17.1" fill="#1ba2d4"/><rect x="230.7" y="32.7" width="17.1" height="17.1" fill="#1ba2d4"/><rect x="-16.8" y="49.2" width="17.1" height="17.1" fill="#1ba2d4"/><rect x="-0.3" y="49.2" width="17.1" height="17.1" fill="#1ba2d4"/><rect x="16.2" y="49.2" width="17.1" height="17.1" fill="#19a569"/><rect x="32.7" y="49.2" width="17.1" height="17.1" fill="#20a426"/><rect x="49.2" y="49.2" width="17.1" height="17.1" fill="#4f94fc"/><rect x="65.7" y="49.2" width="17.1" height="17.1" fill="#be8bfa"/><rect x="82.2" y="49.2" width="17.1" height="17.1" fill="#9682fa"/><rect x="98.7" y="49.2" width="17.1" height="17.1" fill="#20a0fe"/><rect x="115.2" y="49.2" width="17.1" height="17.1" fill="#20a0fe"/><rect x="131.7" y="49.2" width="17.1" height="17.1" fill="#20a0fe"/><rect x="148.2" y="49.2" width="17.1" height="17.1" fill="#20a426"/><rect x="164.7" y="49.2" width="17.1" height="17.1" fill="#98e418"/><rect x="181.2" y="49.2" width="17.1" height="17.1" fill="#68ca1e"/><rect x="197.7" y="49.2" width="17.1" height="17.1" fill="#14a696"/><rect x="214.2" y="49.2" width="17.1" height="17.1" fill="#20a0fe"/><rect x="230.7" y="49.2" width="17.1" height="17.1" fill="#20a0fe"/><rect x="-16.8" y="65.7" width="17.1" height="17.1" fill="#1ba553"/><rect x="-0.3" y="65.7" width="17.1" height="17.1" fill="#1ba553"/><rect x="16.2" y="65.7" width="17.1" height="17.1" fill="#68ca1e"/><rect x="32.7" y="65.7" width="17.1" height="17.1" fill="#98e418"/><rect x="49.2" y="65.7" width="17.1" height="17.1" fill="#68ca1e"/><rect x="65.7" y="65.7" width="17.1" height="17.1" fill="#20a0fe"/><rect x="82.2" y="65.7" width="17.1" height="17.1" fill="#20a0fe"/><rect x="98.7" y="65.7" width="17.1" height="17.1" fill="#20a0fe"/><rect x="115.2" y="65.7" width="17.1" height="17.1" fill="#20a0fe"/><rect x="131.7" y="65.7" width="17.1" height="17.1" fill="#1ba2d4"/><rect x="148.2" y="65.7" width="17.1" height="17.1" fill="#68ca1e"/><rect x="164.7" y="65.7" width="17.1" height="17.1" fill="#98e418"/><rect x="181.2" y="65.7" width="17.1" height="17.1" fill="#20a426"/><rect x="197.7" y="65.7" width="17.1" height="17.1" fill="#14a696"/><rect x="214.2" y="65.7" width="17.1" height="17.1" fill="#20a0fe"/><rect x="230.7" y="65.7" width="17.1" height="17.1" fill="#20a0fe"/><rect x="-16.8" y="82.2" width="17.1" height="17.1" fill="#1ba553"/><rect x="-0.3" y="82.2" width="17.1" height="17.1" fill="#1ba553"/><rect x="16.2" y="82.2" width="17.1" height="17.1" fill="#98e418"/><rect x="32.7" y="82.2" width="17.1" height="17.1" fill="#cdfa1c"/><rect x="49.2" y="82.2" width="17.1" height="17.1" fill="#68ca1e"/><rect x="65.7" y="82.2" width="17.1" height="17.1" fill="#1ba2d4"/><rect x="82.2" y="82.2" width="17.1" height="17.1" fill="#1ba2d4"/><rect x="98.7" y="82.2" width="17.1" height="17.1" fill="#1ba2d4"/><rect x="115.2" y="82.2" width="17.1" height="17.1" fill="#14a696"/><rect x="131.7" y="82.2" width="17.1" height="17.1" fill="#50be20"/><rect x="148.2" y="82.2" width="17.1" height="17.1" fill="#98e418"/><rect x="164.7" y="82.2" width="17.1" height="17.1" fill="#68ca1e"/><rect x="181.2" y="82.2" width="17.1" height="17.1" fill="#1ba553"/><rect x="197.7" y="82.2" width="17.1" height="17.1" fill="#14a696"/><rect x="214.2" y="82.2" width="17.1" height="17.1" fill="#20a0fe"/><rect x="230.7" y="82.2" width="17.1" height="17.1" fill="#20a0fe"/><rect x="-16.8" y="98.7" width="17.1" height="17.1" fill="#19a569"/><rect x="-0.3" y="98.7" width="17.1" height="17.1" fill="#19a569"/><rect x="16.2" y="98.7" width="17.1" height="17.1" fill="#98e418"/><rect x="32.7" y="98.7" width="17.1" height="17.1" fill="#cdfa1c"/><rect x="49.2" y="98.7" width="17.1" height="17.1" fill="#98e418"/><rect x="65.7" y="98.7" width="17.1" height="17.1" fill="#68ca1e"/><rect x="82.2" y="98.7" width="17.1" height="17.1" fill="#20a426"/><rect x="98.7" y="98.7" width="17.1" height="17.1" fill="#1ba553"/><rect x="115.2" y="98.7" width="17.1" height="17.1" fill="#50be20"/><rect x="131.7" y="98.7" width="17.1" height="17.1" fill="#98e418"/><rect x="148.2" y="98.7" width="17.1" height="17.1" fill="#98e418"/><rect x="164.7" y="98.7" width="17.1" height="17.1" fill="#20a426"/><rect x="181.2" y="98.7" width="17.1" height="17.1" fill="#19a569"/><rect x="197.7" y="98.7" width="17.1" height="17.1" fill="#19a4c0"/><rect x="214.2" y="98.7" width="17.1" height="17.1" fill="#20a0fe"/><rect x="230.7" y="98.7" width="17.1" height="17.1" fill="#20a0fe"/><rect x="-16.8" y="115.2" width="17.1" height="17.1" fill="#19a569"/><rect x="-0.3" y="115.2" width="17.1" height="17.1" fill="#19a569"/><rect x="16.2" y="115.2" width="17.1" height="17.1" fill="#20a426"/><rect x="32.7" y="115.2" width="17.1" height="17.1" fill="#68ca1e"/><rect x="49.2" y="115.2" width="17.1" height="17.1" fill="#98e418"/><rect x="65.7" y="115.2" width="17.1" height="17.1" fill="#cdfa1c"/><rect x="82.2" y="115.2" width="17.1" height="17.1" fill="#98e418"/><rect x="98.7" y="115.2" width="17.1" height="17.1" fill="#98e418"/><rect x="115.2" y="115.2" width="17.1" height="17.1" fill="#98e418"/><rect x="131.7" y="115.2" width="17.1" height="17.1" fill="#98e418"/><rect x="148.2" y="115.2" width="17.1" height="17.1" fill="#68ca1e"/><rect x="164.7" y="115.2" width="17.1" height="17.1" fill="#1ba553"/><rect x="181.2" y="115.2" width="17.1" height="17.1" fill="#14a696"/><rect x="197.7" y="115.2" width="17.1" height="17.1" fill="#19a4c0"/><rect x="214.2" y="115.2" width="17.1" height="17.1" fill="#20a0fe"/><rect x="230.7" y="115.2" width="17.1" height="17.1" fill="#20a0fe"/><rect x="-16.8" y="131.7" width="17.1" height="17.1" fill="#1ba2d4"/><rect x="-0.3" y="131.7" width="17.1" height="17.1" fill="#1ba2d4"/><rect x="16.2" y="131.7" width="17.1" height="17.1" fill="#19a569"/><rect x="32.7" y="131.7" width="17.1" height="17.1" fill="#20a426"/><rect x="49.2" y="131.7" width="17.1" height="17.1" fill="#68ca1e"/><rect x="65.7" y="131.7" width="17.1" height="17.1" fill="#98e418"/><rect x="82.2" y="131.7" width="17.1" height="17.1" fill="#98e418"/><rect x="98.7" y="131.7" width="17.1" height="17.1" fill="#98e418"/><rect x="115.2" y="131.7" width="17.1" height="17.1" fill="#98e418"/><rect x="131.7" y="131.7" width="17.1" height="17.1" fill="#68ca1e"/><rect x="148.2" y="131.7" width="17.1" height="17.1" fill="#20a426"/><rect x="164.7" y="131.7" width="17.1" height="17.1" fill="#14a696"/><rect x="181.2" y="131.7" width="17.1" height="17.1" fill="#19a4c0"/><rect x="197.7" y="131.7" width="17.1" height="17.1" fill="#20a0fe"/><rect x="214.2" y="131.7" width="17.1" height="17.1" fill="#4f94fc"/><rect x="230.7" y="131.7" width="17.1" height="17.1" fill="#4f94fc"/><rect x="-16.8" y="148.2" width="17.1" height="17.1" fill="#20a0fe"/><rect x="-0.3" y="148.2" width="17.1" height="17.1" fill="#20a0fe"/><rect x="16.2" y="148.2" width="17.1" height="17.1" fill="#20a0fe"/><rect x="32.7" y="148.2" width="17.1" height="17.1" fill="#14a696"/><rect x="49.2" y="148.2" width="17.1" height="17.1" fill="#1ba553"/><rect x="65.7" y="148.2" width="17.1" height="17.1" fill="#20a426"/><rect x="82.2" y="148.2" width="17.1" height="17.1" fill="#20a426"/><rect x="98.7" y="148.2" width="17.1" height="17.1" fill="#20a426"/><rect x="115.2" y="148.2" width="17.1" height="17.1" fill="#20a426"/><rect x="131.7" y="148.2" width="17.1" height="17.1" fill="#1ba553"/><rect x="148.2" y="148.2" width="17.1" height="17.1" fill="#14a696"/><rect x="164.7" y="148.2" width="17.1" height="17.1" fill="#19a4c0"/><rect x="181.2" y="148.2" width="17.1" height="17.1" fill="#20a0fe"/><rect x="197.7" y="148.2" width="17.1" height="17.1" fill="#4f94fc"/><rect x="214.2" y="148.2" width="17.1" height="17.1" fill="#9682fa"/><rect x="230.7" y="148.2" width="17.1" height="17.1" fill="#9682fa"/><rect x="-16.8" y="164.7" width="17.1" height="17.1" fill="#20a0fe"/><rect x="-0.3" y="164.7" width="17.1" height="17.1" fill="#20a0fe"/><rect x="16.2" y="164.7" width="17.1" height="17.1" fill="#20a0fe"/><rect x="32.7" y="164.7" width="17.1" height="17.1" fill="#20a0fe"/><rect x="49.2" y="164.7" width="17.1" height="17.1" fill="#20a0fe"/><rect x="65.7" y="164.7" width="17.1" height="17.1" fill="#19a4c0"/><rect x="82.2" y="164.7" width="17.1" height="17.1" fill="#14a696"/><rect x="98.7" y="164.7" width="17.1" height="17.1" fill="#14a696"/><rect x="115.2" y="164.7" width="17.1" height="17.1" fill="#14a696"/><rect x="131.7" y="164.7" width="17.1" height="17.1" fill="#19a4c0"/><rect x="148.2" y="164.7" width="17.1" height="17.1" fill="#20a0fe"/><rect x="164.7" y="164.7" width="17.1" height="17.1" fill="#20a0fe"/><rect x="181.2" y="164.7" width="17.1" height="17.1" fill="#4f94fc"/><rect x="197.7" y="164.7" width="17.1" height="17.1" fill="#9682fa"/><rect x="214.2" y="164.7" width="17.1" height="17.1" fill="#be8bfa"/><rect x="230.7" y="164.7" width="17.1" height="17.1" fill="#be8bfa"/><rect x="-16.8" y="181.2" width="17.1" height="17.1" fill="#4f94fc"/><rect x="-0.3" y="181.2" width="17.1" height="17.1" fill="#4f94fc"/><rect x="16.2" y="181.2" width="17.1" height="17.1" fill="#20a0fe"/><rect x="32.7" y="181.2" width="17.1" height="17.1" fill="#20a0fe"/><rect x="49.2" y="181.2" width="17.1" height="17.1" fill="#20a0fe"/><rect x="65.7" y="181.2" width="17.1" height="17.1" fill="#20a0fe"/><rect x="82.2" y="181.2" width="17.1" height="17.1" fill="#20a0fe"/><rect x="98.7" y="181.2" width="17.1" height="17.1" fill="#20a0fe"/><rect x="115.2" y="181.2" width="17.1" height="17.1" fill="#20a0fe"/><rect x="131.7" y="181.2" width="17.1" height="17.1" fill="#20a0fe"/><rect x="148.2" y="181.2" width="17.1" height="17.1" fill="#20a0fe"/><rect x="164.7" y="181.2" width="17.1" height="17.1" fill="#4f94fc"/><rect x="181.2" y="181.2" width="17.1" height="17.1" fill="#be8bfa"/><rect x="197.7" y="181.2" width="17.1" height="17.1" fill="#fa98fa"/><rect x="214.2" y="181.2" width="17.1" height="17.1" fill="#d28ffa"/><rect x="230.7" y="181.2" width="17.1" height="17.1" fill="#d28ffa"/><rect x="-16.8" y="197.7" width="17.1" height="17.1" fill="#678efc"/><rect x="-0.3" y="197.7" width="17.1" height="17.1" fill="#678efc"/><rect x="16.2" y="197.7" width="17.1" height="17.1" fill="#678efc"/><rect x="32.7" y="197.7" width="17.1" height="17.1" fill="#4f94fc"/><rect x="49.2" y="197.7" width="17.1" height="17.1" fill="#4f94fc"/><rect x="65.7" y="197.7" width="17.1" height="17.1" fill="#20a0fe"/><rect x="82.2" y="197.7" width="17.1" height="17.1" fill="#20a0fe"/><rect x="98.7" y="197.7" width="17.1" height="17.1" fill="#20a0fe"/><rect x="115.2" y="197.7" width="17.1" height="17.1" fill="#20a0fe"/><rect x="131.7" y="197.7" width="17.1" height="17.1" fill="#4f94fc"/><rect x="148.2" y="197.7" width="17.1" height="17.1" fill="#9682fa"/><rect x="164.7" y="197.7" width="17.1" height="17.1" fill="#fa98fa"/><rect x="181.2" y="197.7" width="17.1" height="17.1" fill="#fa98fa"/><rect x="197.7" y="197.7" width="17.1" height="17.1" fill="#fa98fa"/><rect x="214.2" y="197.7" width="17.1" height="17.1" fill="#fa98fa"/><rect x="230.7" y="197.7" width="17.1" height="17.1" fill="#fa98fa"/><rect x="-16.8" y="214.2" width="17.1" height="17.1" fill="#9682fa"/><rect x="-0.3" y="214.2" width="17.1" height="17.1" fill="#9682fa"/><rect x="16.2" y="214.2" width="17.1" height="17.1" fill="#9682fa"/><rect x="32.7" y="214.2" width="17.1" height="17.1" fill="#678efc"/><rect x="49.2" y="214.2" width="17.1" height="17.1" fill="#678efc"/><rect x="65.7" y="214.2" width="17.1" height="17.1" fill="#678efc"/><rect x="82.2" y="214.2" width="17.1" height="17.1" fill="#9682fa"/><rect x="98.7" y="214.2" width="17.1" height="17.1" fill="#be8bfa"/><rect x="115.2" y="214.2" width="17.1" height="17.1" fill="#be8bfa"/><rect x="131.7" y="214.2" width="17.1" height="17.1" fill="#fa98fa"/><rect x="148.2" y="214.2" width="17.1" height="17.1" fill="#fa98fa"/><rect x="164.7" y="214.2" width="17.1" height="17.1" fill="#fa98fa"/><rect x="181.2" y="214.2" width="17.1" height="17.1" fill="#fa98fa"/><rect x="197.7" y="214.2" width="17.1" height="17.1" fill="#fa98fa"/><rect x="214.2" y="214.2" width="17.1" height="17.1" fill="#fa98fa"/><rect x="230.7" y="214.2" width="17.1" height="17.1" fill="#fa98fa"/><rect x="-16.8" y="230.7" width="17.1" height="17.1" fill="#9682fa"/><rect x="-0.3" y="230.7" width="17.1" height="17.1" fill="#9682fa"/><rect x="16.2" y="230.7" width="17.1" height="17.1" fill="#9682fa"/><rect x="32.7" y="230.7" width="17.1" height="17.1" fill="#678efc"/><rect x="49.2" y="230.7" width="17.1" height="17.1" fill="#678efc"/><rect x="65.7" y="230.7" width="17.1" height="17.1" fill="#678efc"/><rect x="82.2" y="230.7" width="17.1" height="17.1" fill="#9682fa"/><rect x="98.7" y="230.7" width="17.1" height="17.1" fill="#be8bfa"/><rect x="115.2" y="230.7" width="17.1" height="17.1" fill="#be8bfa"/><rect x="131.7" y="230.7" width="17.1" height="17.1" fill="#fa98fa"/><rect x="148.2" y="230.7" width="17.1" height="17.1" fill="#fa98fa"/><rect x="164.7" y="230.7" width="17.1" height="17.1" fill="#fa98fa"/><rect x="181.2" y="230.7" width="17.1" height="17.1" fill="#fa98fa"/><rect x="197.7" y="230.7" width="17.1" height="17.1" fill="#fa98fa"/><rect x="214.2" y="230.7" width="17.1" height="17.1" fill="#fa98fa"/><rect x="230.7" y="230.7" width="17.1" height="17.1" fill="#fa98fa"/></g><rect transform="translate(0 300)" x="-8" y="-8" width="247" height="247" fill="url(#mpx)"/><rect transform="translate(0 600)" x="-8" y="-8" width="247" height="247" fill="url(#mpy)"/></g><rect width="231" height="231" fill="url(#mp)"/></g></svg><i class="abs" style="left:316.5px;top:210.5px;width:5px;height:5px;border-radius:50%;background:#fff;border:1px solid #8fb8f0"></i><i class="abs" style="left:316.5px;top:326.0px;width:5px;height:5px;border-radius:50%;background:#fff;border:1px solid #8fb8f0"></i><i class="abs" style="left:316.5px;top:441.5px;width:5px;height:5px;border-radius:50%;background:#fff;border:1px solid #8fb8f0"></i><i class="abs" style="left:432.0px;top:210.5px;width:5px;height:5px;border-radius:50%;background:#fff;border:1px solid #8fb8f0"></i><i class="abs" style="left:432.0px;top:441.5px;width:5px;height:5px;border-radius:50%;background:#fff;border:1px solid #8fb8f0"></i><i class="abs" style="left:547.5px;top:210.5px;width:5px;height:5px;border-radius:50%;background:#fff;border:1px solid #8fb8f0"></i><i class="abs" style="left:547.5px;top:326.0px;width:5px;height:5px;border-radius:50%;background:#fff;border:1px solid #8fb8f0"></i><i class="abs" style="left:547.5px;top:441.5px;width:5px;height:5px;border-radius:50%;background:#fff;border:1px solid #8fb8f0"></i>
</body>
</html>
